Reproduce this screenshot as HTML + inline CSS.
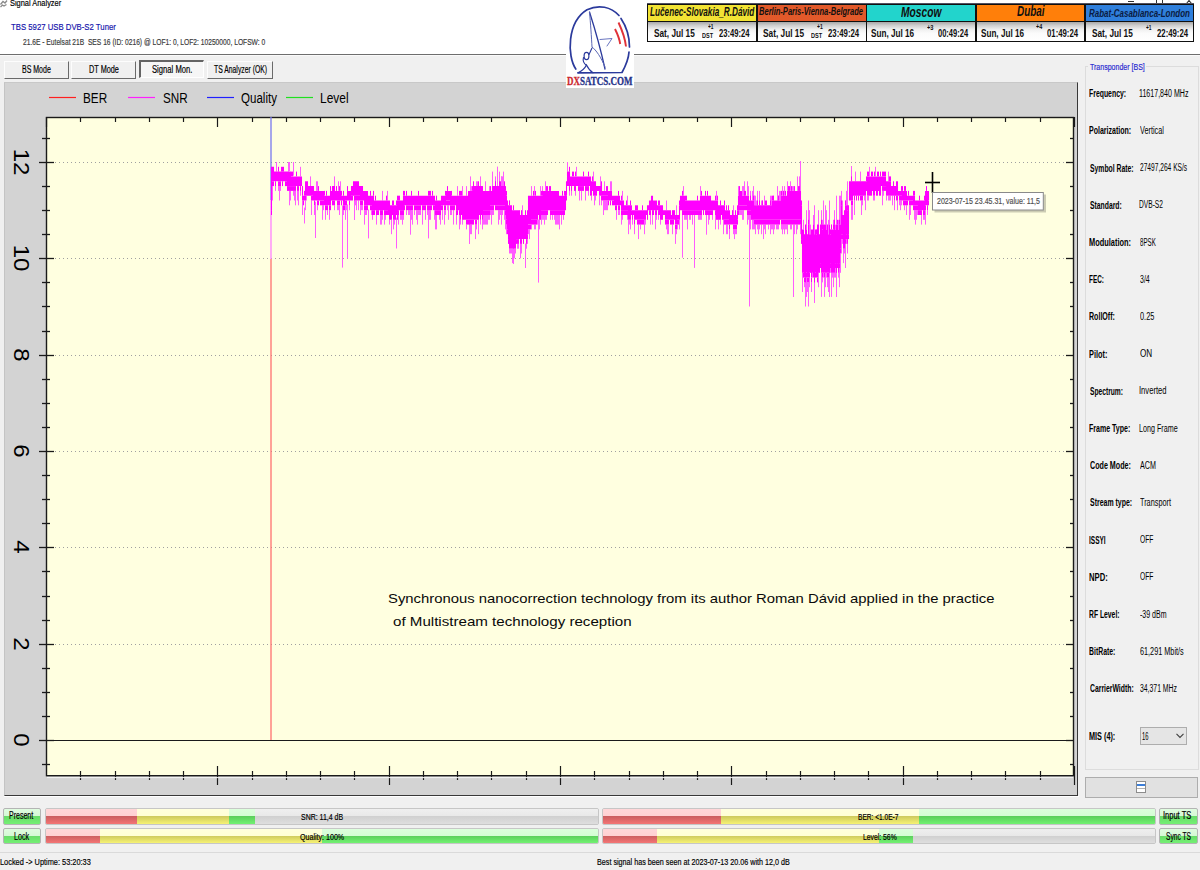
<!DOCTYPE html><html><head><meta charset="utf-8"><style>html,body{margin:0;padding:0;width:1200px;height:870px;overflow:hidden;background:#f0f0f0;position:relative;font-family:"Liberation Sans",sans-serif}.a{position:absolute;box-sizing:border-box}.t{position:absolute;white-space:pre;line-height:1;transform-origin:0 0}.btn{position:absolute;box-sizing:border-box;background:#f0f0f0;border-top:1px solid #fdfdfd;border-left:1px solid #fdfdfd;border-right:1.6px solid #6a6a6a;border-bottom:1.6px solid #6a6a6a}.pb{position:absolute;box-sizing:border-box;border:1px solid #c6c6c6;border-radius:2px;overflow:hidden;background:#e8e8e8}.seg{position:absolute;top:0;bottom:0}.r{background:linear-gradient(#ffd6d8 0,#ffd0d2 50%,#cc5e60 50%,#f47575 100%)}.y{background:linear-gradient(#ffffdc 0,#ffffd4 50%,#cfcb5e 50%,#f6f274 100%)}.g{background:linear-gradient(#dcffdc 0,#d4fdd4 50%,#5ccf5c 50%,#72f272 100%)}.gr{background:linear-gradient(#efefef 0,#e8e8e8 50%,#d0d0d0 50%,#dedede 100%)}.gb{position:absolute;box-sizing:border-box;border:1px solid #b4b4b4;border-radius:2px;background:linear-gradient(#e0fce0 0,#d4f8d4 50%,#68dc68 50%,#74f074 100%)}</style></head><body><div class="a" style="left:0;top:0;width:1200px;height:54px;background:#fff"></div><div class="a" style="left:0;top:54px;width:1200px;height:1px;background:#6e6e6e"></div><div class="a" style="left:0;top:55px;width:1200px;height:1px;background:#fafafa"></div><svg class="a" style="left:0;top:0" width="8" height="8"><path d="M0.5 4.5L3 1.5L5 3L7 0.5M0.5 7L2.5 5L4 6L6.5 4.5" stroke="#8a8a8a" stroke-width="1.3" fill="none"/></svg><div class="a" style="left:1128px;top:0.7px;width:6.3px;height:1.2px;background:#303030"></div><div class="a" style="left:1156.3px;top:0;width:6.4px;height:3.5px;border:1.2px solid #303030;border-top:none"></div><svg class="a" style="left:1185px;top:0" width="8" height="4"><path d="M1.5 3.5L4 0.5L6.5 3.5" stroke="#303030" stroke-width="1.1" fill="none"/></svg><div class="btn" style="left:3.5px;top:60.5px;width:65.5px;height:18px"></div><div class="btn" style="left:71.2px;top:60.5px;width:65.3px;height:18px"></div><div class="btn" style="left:207px;top:60.5px;width:65.5px;height:18px"></div><div class="a" style="left:139.3px;top:60px;width:65px;height:18px;background:#f6f6f6;border-top:2px solid #646464;border-left:2px solid #646464;border-right:1px solid #fff;border-bottom:1px solid #fff"></div><div class="a" style="left:4px;top:82px;width:1074px;height:714px;background:#d3d3d3;border-left:1px solid #c4c4c4;border-top:1px solid #c8c8c8;border-right:1.6px solid #383838;border-bottom:1.6px solid #383838"></div><div class="a" style="left:4px;top:796px;width:1075px;height:1px;background:#fff"></div><svg class="a" style="left:0;top:0" width="1200" height="870" viewBox="0 0 1200 870"><rect x="46" y="117" width="1028" height="658" fill="#ffffe0"/><line x1="55" y1="644.5" x2="1066" y2="644.5" stroke="#a0a0a0" stroke-width="1" stroke-dasharray="1 3"/><line x1="55" y1="547.5" x2="1066" y2="547.5" stroke="#a0a0a0" stroke-width="1" stroke-dasharray="1 3"/><line x1="55" y1="451.5" x2="1066" y2="451.5" stroke="#a0a0a0" stroke-width="1" stroke-dasharray="1 3"/><line x1="55" y1="355.5" x2="1066" y2="355.5" stroke="#a0a0a0" stroke-width="1" stroke-dasharray="1 3"/><line x1="55" y1="258.5" x2="1066" y2="258.5" stroke="#a0a0a0" stroke-width="1" stroke-dasharray="1 3"/><line x1="55" y1="162.5" x2="1066" y2="162.5" stroke="#a0a0a0" stroke-width="1" stroke-dasharray="1 3"/><line x1="39" y1="740.5" x2="1074" y2="740.5" stroke="#1a1a1a" stroke-width="1"/><line x1="42" y1="764.5" x2="50" y2="764.5" stroke="#1a1a1a" stroke-width="1.3"/><line x1="1070" y1="764.5" x2="1074" y2="764.5" stroke="#1a1a1a" stroke-width="1.3"/><line x1="39" y1="740.5" x2="54" y2="740.5" stroke="#1a1a1a" stroke-width="1.3"/><line x1="1066" y1="740.5" x2="1074" y2="740.5" stroke="#1a1a1a" stroke-width="1.3"/><line x1="42" y1="716.5" x2="50" y2="716.5" stroke="#1a1a1a" stroke-width="1.3"/><line x1="1070" y1="716.5" x2="1074" y2="716.5" stroke="#1a1a1a" stroke-width="1.3"/><line x1="42" y1="692.5" x2="50" y2="692.5" stroke="#1a1a1a" stroke-width="1.3"/><line x1="1070" y1="692.5" x2="1074" y2="692.5" stroke="#1a1a1a" stroke-width="1.3"/><line x1="42" y1="668.5" x2="50" y2="668.5" stroke="#1a1a1a" stroke-width="1.3"/><line x1="1070" y1="668.5" x2="1074" y2="668.5" stroke="#1a1a1a" stroke-width="1.3"/><line x1="39" y1="644.5" x2="54" y2="644.5" stroke="#1a1a1a" stroke-width="1.3"/><line x1="1066" y1="644.5" x2="1074" y2="644.5" stroke="#1a1a1a" stroke-width="1.3"/><line x1="42" y1="620.5" x2="50" y2="620.5" stroke="#1a1a1a" stroke-width="1.3"/><line x1="1070" y1="620.5" x2="1074" y2="620.5" stroke="#1a1a1a" stroke-width="1.3"/><line x1="42" y1="596.5" x2="50" y2="596.5" stroke="#1a1a1a" stroke-width="1.3"/><line x1="1070" y1="596.5" x2="1074" y2="596.5" stroke="#1a1a1a" stroke-width="1.3"/><line x1="42" y1="571.5" x2="50" y2="571.5" stroke="#1a1a1a" stroke-width="1.3"/><line x1="1070" y1="571.5" x2="1074" y2="571.5" stroke="#1a1a1a" stroke-width="1.3"/><line x1="39" y1="547.5" x2="54" y2="547.5" stroke="#1a1a1a" stroke-width="1.3"/><line x1="1066" y1="547.5" x2="1074" y2="547.5" stroke="#1a1a1a" stroke-width="1.3"/><line x1="42" y1="523.5" x2="50" y2="523.5" stroke="#1a1a1a" stroke-width="1.3"/><line x1="1070" y1="523.5" x2="1074" y2="523.5" stroke="#1a1a1a" stroke-width="1.3"/><line x1="42" y1="499.5" x2="50" y2="499.5" stroke="#1a1a1a" stroke-width="1.3"/><line x1="1070" y1="499.5" x2="1074" y2="499.5" stroke="#1a1a1a" stroke-width="1.3"/><line x1="42" y1="475.5" x2="50" y2="475.5" stroke="#1a1a1a" stroke-width="1.3"/><line x1="1070" y1="475.5" x2="1074" y2="475.5" stroke="#1a1a1a" stroke-width="1.3"/><line x1="39" y1="451.5" x2="54" y2="451.5" stroke="#1a1a1a" stroke-width="1.3"/><line x1="1066" y1="451.5" x2="1074" y2="451.5" stroke="#1a1a1a" stroke-width="1.3"/><line x1="42" y1="427.5" x2="50" y2="427.5" stroke="#1a1a1a" stroke-width="1.3"/><line x1="1070" y1="427.5" x2="1074" y2="427.5" stroke="#1a1a1a" stroke-width="1.3"/><line x1="42" y1="403.5" x2="50" y2="403.5" stroke="#1a1a1a" stroke-width="1.3"/><line x1="1070" y1="403.5" x2="1074" y2="403.5" stroke="#1a1a1a" stroke-width="1.3"/><line x1="42" y1="379.5" x2="50" y2="379.5" stroke="#1a1a1a" stroke-width="1.3"/><line x1="1070" y1="379.5" x2="1074" y2="379.5" stroke="#1a1a1a" stroke-width="1.3"/><line x1="39" y1="355.5" x2="54" y2="355.5" stroke="#1a1a1a" stroke-width="1.3"/><line x1="1066" y1="355.5" x2="1074" y2="355.5" stroke="#1a1a1a" stroke-width="1.3"/><line x1="42" y1="331.5" x2="50" y2="331.5" stroke="#1a1a1a" stroke-width="1.3"/><line x1="1070" y1="331.5" x2="1074" y2="331.5" stroke="#1a1a1a" stroke-width="1.3"/><line x1="42" y1="306.5" x2="50" y2="306.5" stroke="#1a1a1a" stroke-width="1.3"/><line x1="1070" y1="306.5" x2="1074" y2="306.5" stroke="#1a1a1a" stroke-width="1.3"/><line x1="42" y1="282.5" x2="50" y2="282.5" stroke="#1a1a1a" stroke-width="1.3"/><line x1="1070" y1="282.5" x2="1074" y2="282.5" stroke="#1a1a1a" stroke-width="1.3"/><line x1="39" y1="258.5" x2="54" y2="258.5" stroke="#1a1a1a" stroke-width="1.3"/><line x1="1066" y1="258.5" x2="1074" y2="258.5" stroke="#1a1a1a" stroke-width="1.3"/><line x1="42" y1="234.5" x2="50" y2="234.5" stroke="#1a1a1a" stroke-width="1.3"/><line x1="1070" y1="234.5" x2="1074" y2="234.5" stroke="#1a1a1a" stroke-width="1.3"/><line x1="42" y1="210.5" x2="50" y2="210.5" stroke="#1a1a1a" stroke-width="1.3"/><line x1="1070" y1="210.5" x2="1074" y2="210.5" stroke="#1a1a1a" stroke-width="1.3"/><line x1="42" y1="186.5" x2="50" y2="186.5" stroke="#1a1a1a" stroke-width="1.3"/><line x1="1070" y1="186.5" x2="1074" y2="186.5" stroke="#1a1a1a" stroke-width="1.3"/><line x1="39" y1="162.5" x2="54" y2="162.5" stroke="#1a1a1a" stroke-width="1.3"/><line x1="1066" y1="162.5" x2="1074" y2="162.5" stroke="#1a1a1a" stroke-width="1.3"/><line x1="42" y1="138.5" x2="50" y2="138.5" stroke="#1a1a1a" stroke-width="1.3"/><line x1="1070" y1="138.5" x2="1074" y2="138.5" stroke="#1a1a1a" stroke-width="1.3"/><line x1="46.5" y1="117" x2="46.5" y2="127" stroke="#1a1a1a" stroke-width="1.2"/><line x1="80.5" y1="771" x2="80.5" y2="780" stroke="#1a1a1a" stroke-width="1.2"/><line x1="80.5" y1="117" x2="80.5" y2="122" stroke="#1a1a1a" stroke-width="1.2"/><line x1="115.5" y1="771" x2="115.5" y2="780" stroke="#1a1a1a" stroke-width="1.2"/><line x1="115.5" y1="117" x2="115.5" y2="122" stroke="#1a1a1a" stroke-width="1.2"/><line x1="149.5" y1="771" x2="149.5" y2="780" stroke="#1a1a1a" stroke-width="1.2"/><line x1="149.5" y1="117" x2="149.5" y2="122" stroke="#1a1a1a" stroke-width="1.2"/><line x1="183.5" y1="771" x2="183.5" y2="780" stroke="#1a1a1a" stroke-width="1.2"/><line x1="183.5" y1="117" x2="183.5" y2="122" stroke="#1a1a1a" stroke-width="1.2"/><line x1="217.5" y1="766" x2="217.5" y2="785" stroke="#1a1a1a" stroke-width="1.2"/><line x1="217.5" y1="117" x2="217.5" y2="127" stroke="#1a1a1a" stroke-width="1.2"/><line x1="252.5" y1="771" x2="252.5" y2="780" stroke="#1a1a1a" stroke-width="1.2"/><line x1="252.5" y1="117" x2="252.5" y2="122" stroke="#1a1a1a" stroke-width="1.2"/><line x1="286.5" y1="771" x2="286.5" y2="780" stroke="#1a1a1a" stroke-width="1.2"/><line x1="286.5" y1="117" x2="286.5" y2="122" stroke="#1a1a1a" stroke-width="1.2"/><line x1="320.5" y1="771" x2="320.5" y2="780" stroke="#1a1a1a" stroke-width="1.2"/><line x1="320.5" y1="117" x2="320.5" y2="122" stroke="#1a1a1a" stroke-width="1.2"/><line x1="354.5" y1="771" x2="354.5" y2="780" stroke="#1a1a1a" stroke-width="1.2"/><line x1="354.5" y1="117" x2="354.5" y2="122" stroke="#1a1a1a" stroke-width="1.2"/><line x1="389.5" y1="766" x2="389.5" y2="785" stroke="#1a1a1a" stroke-width="1.2"/><line x1="389.5" y1="117" x2="389.5" y2="127" stroke="#1a1a1a" stroke-width="1.2"/><line x1="423.5" y1="771" x2="423.5" y2="780" stroke="#1a1a1a" stroke-width="1.2"/><line x1="423.5" y1="117" x2="423.5" y2="122" stroke="#1a1a1a" stroke-width="1.2"/><line x1="457.5" y1="771" x2="457.5" y2="780" stroke="#1a1a1a" stroke-width="1.2"/><line x1="457.5" y1="117" x2="457.5" y2="122" stroke="#1a1a1a" stroke-width="1.2"/><line x1="491.5" y1="771" x2="491.5" y2="780" stroke="#1a1a1a" stroke-width="1.2"/><line x1="491.5" y1="117" x2="491.5" y2="122" stroke="#1a1a1a" stroke-width="1.2"/><line x1="526.5" y1="771" x2="526.5" y2="780" stroke="#1a1a1a" stroke-width="1.2"/><line x1="526.5" y1="117" x2="526.5" y2="122" stroke="#1a1a1a" stroke-width="1.2"/><line x1="560.5" y1="766" x2="560.5" y2="785" stroke="#1a1a1a" stroke-width="1.2"/><line x1="560.5" y1="117" x2="560.5" y2="127" stroke="#1a1a1a" stroke-width="1.2"/><line x1="594.5" y1="771" x2="594.5" y2="780" stroke="#1a1a1a" stroke-width="1.2"/><line x1="594.5" y1="117" x2="594.5" y2="122" stroke="#1a1a1a" stroke-width="1.2"/><line x1="629.5" y1="771" x2="629.5" y2="780" stroke="#1a1a1a" stroke-width="1.2"/><line x1="629.5" y1="117" x2="629.5" y2="122" stroke="#1a1a1a" stroke-width="1.2"/><line x1="663.5" y1="771" x2="663.5" y2="780" stroke="#1a1a1a" stroke-width="1.2"/><line x1="663.5" y1="117" x2="663.5" y2="122" stroke="#1a1a1a" stroke-width="1.2"/><line x1="697.5" y1="771" x2="697.5" y2="780" stroke="#1a1a1a" stroke-width="1.2"/><line x1="697.5" y1="117" x2="697.5" y2="122" stroke="#1a1a1a" stroke-width="1.2"/><line x1="731.5" y1="766" x2="731.5" y2="785" stroke="#1a1a1a" stroke-width="1.2"/><line x1="731.5" y1="117" x2="731.5" y2="127" stroke="#1a1a1a" stroke-width="1.2"/><line x1="766.5" y1="771" x2="766.5" y2="780" stroke="#1a1a1a" stroke-width="1.2"/><line x1="766.5" y1="117" x2="766.5" y2="122" stroke="#1a1a1a" stroke-width="1.2"/><line x1="800.5" y1="771" x2="800.5" y2="780" stroke="#1a1a1a" stroke-width="1.2"/><line x1="800.5" y1="117" x2="800.5" y2="122" stroke="#1a1a1a" stroke-width="1.2"/><line x1="834.5" y1="771" x2="834.5" y2="780" stroke="#1a1a1a" stroke-width="1.2"/><line x1="834.5" y1="117" x2="834.5" y2="122" stroke="#1a1a1a" stroke-width="1.2"/><line x1="868.5" y1="771" x2="868.5" y2="780" stroke="#1a1a1a" stroke-width="1.2"/><line x1="868.5" y1="117" x2="868.5" y2="122" stroke="#1a1a1a" stroke-width="1.2"/><line x1="903.5" y1="766" x2="903.5" y2="785" stroke="#1a1a1a" stroke-width="1.2"/><line x1="903.5" y1="117" x2="903.5" y2="127" stroke="#1a1a1a" stroke-width="1.2"/><line x1="937.5" y1="771" x2="937.5" y2="780" stroke="#1a1a1a" stroke-width="1.2"/><line x1="937.5" y1="117" x2="937.5" y2="122" stroke="#1a1a1a" stroke-width="1.2"/><line x1="971.5" y1="771" x2="971.5" y2="780" stroke="#1a1a1a" stroke-width="1.2"/><line x1="971.5" y1="117" x2="971.5" y2="122" stroke="#1a1a1a" stroke-width="1.2"/><line x1="1005.5" y1="771" x2="1005.5" y2="780" stroke="#1a1a1a" stroke-width="1.2"/><line x1="1005.5" y1="117" x2="1005.5" y2="122" stroke="#1a1a1a" stroke-width="1.2"/><line x1="1040.5" y1="771" x2="1040.5" y2="780" stroke="#1a1a1a" stroke-width="1.2"/><line x1="1040.5" y1="117" x2="1040.5" y2="122" stroke="#1a1a1a" stroke-width="1.2"/><line x1="1074.5" y1="766" x2="1074.5" y2="785" stroke="#1a1a1a" stroke-width="1.2"/><line x1="1074.5" y1="117" x2="1074.5" y2="127" stroke="#1a1a1a" stroke-width="1.2"/><rect x="46.5" y="117.5" width="1027" height="658.2" fill="none" stroke="#1a1a1a" stroke-width="1.4"/><line x1="47" y1="777.6" x2="1073" y2="777.6" stroke="#f4f4f4" stroke-width="1"/><line x1="271" y1="259" x2="271" y2="740" stroke="#ff7070" stroke-width="1.3"/><line x1="271" y1="200" x2="271" y2="259" stroke="#ff80ff" stroke-width="1.3"/><line x1="271" y1="117" x2="271" y2="200" stroke="#7878f0" stroke-width="1.3"/><path d="M272.5 186.1V200.5M275.5 186.1V190.9M276.5 171.6V162.0M278.5 186.1V190.9M279.5 186.1V200.5M280.5 186.1V190.9M288.5 171.6V162.0M289.5 190.9V205.3M290.5 190.9V200.5M293.5 190.9V195.7M294.5 190.9V200.5M295.5 190.9V205.3M297.5 190.9V200.5M298.5 190.9V205.3M300.5 190.9V195.7M300.5 176.4V166.8M302.5 200.5V215.0M305.5 200.5V210.2M306.5 195.7V200.5M310.5 186.1V176.4M311.5 200.5V215.0M314.5 205.3V215.0M316.5 190.9V181.3M317.5 205.3V210.2M317.5 190.9V181.3M322.5 205.3V219.8M323.5 205.3V210.2M325.5 210.2V219.8M327.5 210.2V215.0M329.5 210.2V219.8M334.5 205.3V210.2M334.5 186.1V176.4M337.5 205.3V210.2M338.5 205.3V210.2M338.5 190.9V181.3M339.5 205.3V215.0M340.5 190.9V181.3M343.5 210.2V215.0M345.5 205.3V219.8M346.5 205.3V210.2M349.5 205.3V210.2M354.5 200.5V205.3M355.5 200.5V205.3M356.5 200.5V210.2M358.5 200.5V210.2M360.5 205.3V215.0M361.5 205.3V210.2M362.5 205.3V210.2M364.5 210.2V224.6M365.5 210.2V215.0M366.5 210.2V215.0M371.5 210.2V215.0M372.5 215.0V219.8M376.5 215.0V224.6M380.5 215.0V224.6M381.5 215.0V224.6M382.5 215.0V219.8M382.5 200.5V190.9M384.5 215.0V224.6M385.5 215.0V219.8M387.5 200.5V190.9M389.5 219.8V224.6M391.5 219.8V234.2M393.5 219.8V229.4M394.5 219.8V224.6M398.5 215.0V224.6M400.5 215.0V219.8M401.5 215.0V219.8M402.5 215.0V224.6M403.5 215.0V219.8M406.5 210.2V215.0M408.5 210.2V215.0M409.5 210.2V215.0M411.5 210.2V219.8M412.5 210.2V224.6M414.5 210.2V215.0M416.5 210.2V219.8M417.5 210.2V224.6M418.5 210.2V215.0M419.5 210.2V215.0M420.5 210.2V215.0M422.5 210.2V224.6M425.5 210.2V219.8M427.5 210.2V215.0M429.5 210.2V219.8M430.5 210.2V219.8M434.5 210.2V219.8M435.5 215.0V229.4M436.5 215.0V229.4M439.5 215.0V219.8M440.5 215.0V224.6M442.5 210.2V219.8M444.5 210.2V224.6M445.5 210.2V215.0M447.5 205.3V210.2M448.5 205.3V219.8M450.5 210.2V215.0M451.5 210.2V215.0M453.5 210.2V224.6M456.5 215.0V224.6M457.5 195.7V186.1M459.5 215.0V229.4M460.5 219.8V224.6M462.5 219.8V224.6M462.5 195.7V186.1M466.5 195.7V186.1M466.5 224.6V229.4M469.5 224.6V234.2M470.5 190.9V176.4M470.5 224.6V234.2M471.5 190.9V186.1M471.5 224.6V234.2M475.5 224.6V239.1M476.5 186.1V181.3M476.5 224.6V229.4M477.5 186.1V181.3M478.5 219.8V234.2M480.5 186.1V176.4M480.5 219.8V224.6M482.5 190.9V186.1M482.5 219.8V229.4M483.5 215.0V224.6M484.5 215.0V224.6M485.5 215.0V224.6M485.5 190.9V181.3M486.5 215.0V224.6M487.5 215.0V224.6M488.5 215.0V219.8M489.5 190.9V186.1M489.5 215.0V219.8M490.5 210.2V215.0M491.5 210.2V224.6M492.5 186.1V171.6M492.5 210.2V215.0M493.5 210.2V215.0M495.5 186.1V176.4M498.5 210.2V224.6M499.5 186.1V171.6M499.5 210.2V219.8M500.5 210.2V215.0M501.5 186.1V176.4M501.5 210.2V224.6M501.5 186.1V176.4M502.5 210.2V215.0M502.5 186.1V176.4M503.5 186.1V171.6M504.5 210.2V219.8M505.5 215.0V229.4M506.5 224.6V234.2M509.5 205.3V200.5M509.5 248.7V253.5M510.5 248.7V253.5M511.5 248.7V253.5M512.5 248.7V263.1M514.5 248.7V258.3M515.5 248.7V253.5M517.5 243.9V248.7M518.5 243.9V248.7M520.5 243.9V258.3M521.5 243.9V253.5M522.5 215.0V205.3M526.5 243.9V248.7M527.5 239.1V243.9M528.5 229.4V234.2M529.5 229.4V239.1M531.5 224.6V229.4M531.5 195.7V186.1M534.5 224.6V229.4M534.5 195.7V186.1M535.5 224.6V229.4M537.5 219.8V224.6M539.5 219.8V229.4M540.5 195.7V186.1M541.5 215.0V224.6M542.5 195.7V186.1M542.5 215.0V219.8M543.5 215.0V219.8M544.5 215.0V224.6M545.5 190.9V181.3M545.5 215.0V219.8M546.5 215.0V219.8M550.5 215.0V219.8M552.5 215.0V219.8M554.5 215.0V219.8M555.5 215.0V224.6M556.5 215.0V224.6M557.5 215.0V224.6M558.5 215.0V224.6M559.5 215.0V229.4M561.5 215.0V224.6M563.5 215.0V219.8M567.5 171.6V162.0M569.5 190.9V195.7M571.5 190.9V195.7M575.5 190.9V195.7M576.5 176.4V166.8M579.5 190.9V200.5M581.5 190.9V200.5M585.5 190.9V200.5M588.5 190.9V195.7M591.5 195.7V200.5M593.5 181.3V171.6M594.5 195.7V205.3M595.5 195.7V200.5M599.5 195.7V205.3M600.5 186.1V176.4M601.5 200.5V205.3M603.5 200.5V215.0M604.5 200.5V210.2M604.5 190.9V181.3M605.5 200.5V210.2M606.5 200.5V210.2M607.5 200.5V210.2M610.5 190.9V181.3M611.5 190.9V181.3M616.5 210.2V219.8M618.5 210.2V215.0M619.5 210.2V215.0M621.5 215.0V224.6M622.5 215.0V219.8M622.5 200.5V190.9M627.5 215.0V219.8M627.5 205.3V195.7M628.5 219.8V234.2M629.5 219.8V224.6M630.5 219.8V229.4M632.5 219.8V224.6M634.5 224.6V234.2M638.5 224.6V239.1M640.5 224.6V229.4M644.5 219.8V234.2M645.5 219.8V224.6M650.5 215.0V224.6M652.5 215.0V224.6M655.5 215.0V229.4M656.5 215.0V219.8M658.5 215.0V219.8M660.5 219.8V224.6M666.5 224.6V229.4M666.5 210.2V200.5M667.5 224.6V234.2M668.5 224.6V234.2M672.5 224.6V234.2M675.5 229.4V243.9M676.5 229.4V234.2M676.5 215.0V205.3M677.5 224.6V229.4M679.5 219.8V229.4M682.5 215.0V219.8M683.5 195.7V186.1M684.5 215.0V219.8M685.5 215.0V219.8M686.5 215.0V219.8M687.5 215.0V229.4M689.5 215.0V219.8M690.5 215.0V219.8M692.5 215.0V224.6M694.5 215.0V219.8M698.5 215.0V219.8M699.5 215.0V219.8M700.5 215.0V219.8M700.5 195.7V186.1M701.5 215.0V219.8M708.5 215.0V224.6M709.5 215.0V219.8M712.5 215.0V219.8M715.5 215.0V229.4M716.5 200.5V190.9M718.5 219.8V229.4M720.5 219.8V224.6M723.5 219.8V234.2M726.5 224.6V234.2M727.5 224.6V234.2M729.5 229.4V239.1M733.5 229.4V234.2M733.5 215.0V205.3M734.5 229.4V239.1M735.5 229.4V234.2M736.5 229.4V234.2M738.5 195.7V186.1M739.5 210.2V215.0M740.5 210.2V215.0M741.5 210.2V215.0M742.5 210.2V219.8M742.5 195.7V186.1M743.5 195.7V186.1M743.5 210.2V219.8M744.5 195.7V181.3M747.5 195.7V181.3M747.5 215.0V224.6M748.5 195.7V186.1M748.5 215.0V219.8M749.5 215.0V224.6M750.5 200.5V190.9M750.5 215.0V229.4M752.5 200.5V190.9M752.5 219.8V229.4M753.5 200.5V186.1M753.5 219.8V229.4M754.5 205.3V195.7M754.5 224.6V229.4M754.5 205.3V195.7M755.5 205.3V195.7M755.5 224.6V234.2M756.5 205.3V200.5M757.5 205.3V190.9M757.5 224.6V229.4M758.5 224.6V234.2M759.5 205.3V190.9M759.5 224.6V229.4M761.5 205.3V200.5M761.5 224.6V234.2M762.5 205.3V200.5M763.5 224.6V239.1M764.5 205.3V195.7M764.5 224.6V229.4M765.5 224.6V234.2M768.5 224.6V229.4M770.5 205.3V195.7M770.5 224.6V234.2M771.5 205.3V195.7M771.5 224.6V229.4M772.5 224.6V229.4M773.5 200.5V195.7M773.5 224.6V234.2M774.5 224.6V229.4M776.5 224.6V229.4M777.5 200.5V186.1M777.5 224.6V229.4M777.5 200.5V190.9M778.5 200.5V195.7M778.5 224.6V229.4M779.5 200.5V190.9M780.5 200.5V190.9M781.5 224.6V229.4M782.5 195.7V186.1M782.5 224.6V234.2M783.5 195.7V190.9M783.5 224.6V229.4M784.5 224.6V234.2M784.5 195.7V186.1M785.5 224.6V229.4M786.5 224.6V229.4M787.5 190.9V181.3M787.5 224.6V234.2M788.5 190.9V186.1M790.5 190.9V181.3M790.5 224.6V229.4M791.5 224.6V229.4M792.5 190.9V186.1M793.5 190.9V186.1M793.5 224.6V229.4M794.5 224.6V234.2M796.5 224.6V234.2M797.5 190.9V176.4M797.5 224.6V229.4M799.5 190.9V176.4M800.5 190.9V186.1M800.5 224.6V234.2M802.5 272.8V292.0M803.5 229.4V219.8M804.5 282.4V287.2M806.5 229.4V210.2M806.5 277.6V296.9M807.5 282.4V292.0M808.5 224.6V200.5M808.5 282.4V306.5M809.5 234.2V210.2M809.5 277.6V287.2M810.5 234.2V224.6M811.5 282.4V292.0M812.5 272.8V277.6M813.5 224.6V215.0M814.5 234.2V205.3M814.5 282.4V301.7M814.5 234.2V224.6M818.5 224.6V210.2M818.5 272.8V287.2M818.5 224.6V215.0M821.5 224.6V210.2M821.5 272.8V296.9M822.5 229.4V219.8M822.5 277.6V282.4M823.5 224.6V200.5M823.5 272.8V277.6M824.5 277.6V296.9M825.5 224.6V205.3M825.5 272.8V287.2M826.5 229.4V210.2M826.5 272.8V277.6M827.5 277.6V287.2M828.5 234.2V219.8M828.5 277.6V292.0M829.5 224.6V200.5M829.5 272.8V292.0M830.5 268.0V272.8M831.5 229.4V224.6M831.5 272.8V296.9M832.5 272.8V277.6M833.5 229.4V219.8M833.5 272.8V287.2M834.5 224.6V210.2M834.5 272.8V277.6M835.5 229.4V224.6M835.5 268.0V277.6M836.5 224.6V195.7M836.5 272.8V292.0M838.5 272.8V277.6M838.5 229.4V219.8M839.5 224.6V195.7M839.5 268.0V287.2M840.5 224.6V195.7M840.5 253.5V272.8M841.5 205.3V190.9M841.5 239.1V253.5M842.5 215.0V200.5M842.5 239.1V243.9M843.5 248.7V263.1M844.5 248.7V253.5M845.5 205.3V200.5M845.5 243.9V268.0M846.5 205.3V190.9M846.5 239.1V243.9M847.5 210.2V181.3M847.5 243.9V253.5M851.5 205.3V219.8M852.5 205.3V219.8M854.5 200.5V215.0M855.5 181.3V171.6M860.5 181.3V171.6M861.5 200.5V215.0M862.5 200.5V205.3M864.5 195.7V200.5M865.5 195.7V210.2M867.5 195.7V200.5M868.5 195.7V200.5M869.5 176.4V166.8M873.5 195.7V200.5M874.5 195.7V200.5M875.5 176.4V166.8M882.5 190.9V205.3M883.5 190.9V195.7M886.5 195.7V200.5M888.5 195.7V200.5M888.5 181.3V171.6M889.5 195.7V200.5M890.5 195.7V200.5M892.5 195.7V205.3M894.5 200.5V210.2M897.5 200.5V210.2M899.5 200.5V205.3M900.5 200.5V210.2M901.5 200.5V205.3M904.5 205.3V210.2M906.5 205.3V215.0M909.5 205.3V219.8M910.5 205.3V215.0M914.5 210.2V219.8M915.5 210.2V224.6M916.5 210.2V219.8M917.5 210.2V215.0M921.5 215.0V224.6M923.5 215.0V219.8M924.5 215.0V219.8M925.5 210.2V224.6M927.5 210.2V215.0M304.5 207.6V223.5M315.5 201.7V238M342.5 205.5V267.6M347.5 204.5V258.5M354.5 197.3V220M368.5 209.5V238.4M396.5 217.6V248.5M410.5 209.5V234.7M428.5 210.0V238.4M469.5 223.0V244M538.5 219.5V282.6M513.5 245.9V264M525.5 243.5V268M682.5 212.3V257.7M694.5 210.8V267.9M706.5 210.8V234.7M749.5 213.0V306.5M793.5 225.0V297M805.5 276.0V306.5M814.5 276.0V303M829.5 269.0V297M836.5 268.4V297M289.5 171.0V162M293.5 175.7V162M497.5 186.1V166.6M800.5 192.0V161M851.5 180.1V166" stroke="#ff5cff" stroke-width="1" fill="none"/><path d="M271.5 210.2V215.0M272.5 181.3V186.1M273.5 181.3V186.1M275.5 181.3V186.1M278.5 181.3V186.1M278.5 171.6V166.8M279.5 181.3V186.1M280.5 181.3V186.1M281.5 171.6V166.8M282.5 181.3V186.1M282.5 171.6V166.8M283.5 171.6V166.8M285.5 181.3V186.1M286.5 181.3V186.1M287.5 186.1V190.9M288.5 186.1V190.9M289.5 186.1V190.9M290.5 186.1V190.9M291.5 186.1V190.9M291.5 176.4V171.6M292.5 186.1V190.9M292.5 176.4V171.6M293.5 186.1V190.9M294.5 186.1V190.9M295.5 186.1V190.9M296.5 176.4V171.6M297.5 186.1V190.9M298.5 186.1V190.9M300.5 186.1V190.9M302.5 195.7V200.5M303.5 200.5V195.7M304.5 195.7V190.9M305.5 195.7V200.5M305.5 186.1V181.3M306.5 190.9V195.7M311.5 195.7V200.5M312.5 195.7V200.5M314.5 200.5V205.3M317.5 200.5V205.3M318.5 200.5V205.3M318.5 190.9V186.1M320.5 200.5V205.3M321.5 200.5V205.3M322.5 200.5V205.3M323.5 200.5V205.3M324.5 195.7V190.9M325.5 205.3V210.2M326.5 205.3V210.2M326.5 195.7V190.9M327.5 205.3V210.2M329.5 205.3V210.2M330.5 205.3V210.2M330.5 190.9V186.1M332.5 200.5V205.3M333.5 200.5V205.3M334.5 200.5V205.3M336.5 190.9V186.1M337.5 200.5V205.3M338.5 200.5V205.3M339.5 200.5V205.3M339.5 190.9V186.1M341.5 200.5V205.3M341.5 195.7V190.9M343.5 205.3V210.2M343.5 195.7V190.9M344.5 205.3V210.2M345.5 200.5V205.3M346.5 200.5V205.3M347.5 190.9V186.1M349.5 200.5V205.3M351.5 195.7V200.5M352.5 195.7V200.5M354.5 195.7V200.5M355.5 195.7V200.5M356.5 195.7V200.5M357.5 195.7V200.5M358.5 195.7V200.5M359.5 195.7V200.5M360.5 200.5V205.3M361.5 200.5V205.3M362.5 200.5V205.3M364.5 205.3V210.2M365.5 205.3V210.2M366.5 205.3V210.2M367.5 205.3V210.2M370.5 205.3V210.2M370.5 195.7V190.9M371.5 205.3V210.2M372.5 210.2V215.0M373.5 210.2V215.0M373.5 195.7V190.9M374.5 210.2V215.0M375.5 200.5V195.7M376.5 210.2V215.0M377.5 210.2V215.0M378.5 210.2V215.0M380.5 210.2V215.0M381.5 210.2V215.0M382.5 210.2V215.0M384.5 210.2V215.0M385.5 210.2V215.0M386.5 210.2V215.0M386.5 200.5V195.7M387.5 210.2V215.0M389.5 215.0V219.8M390.5 215.0V219.8M391.5 215.0V219.8M392.5 205.3V200.5M393.5 215.0V219.8M393.5 205.3V200.5M394.5 215.0V219.8M395.5 215.0V219.8M396.5 205.3V200.5M397.5 215.0V219.8M397.5 200.5V195.7M398.5 210.2V215.0M398.5 200.5V195.7M399.5 200.5V195.7M400.5 210.2V215.0M401.5 210.2V215.0M402.5 210.2V215.0M403.5 210.2V215.0M403.5 195.7V190.9M404.5 205.3V210.2M404.5 195.7V190.9M406.5 205.3V210.2M406.5 195.7V190.9M407.5 205.3V210.2M408.5 205.3V210.2M409.5 205.3V210.2M410.5 205.3V210.2M411.5 205.3V210.2M411.5 195.7V190.9M412.5 205.3V210.2M414.5 205.3V210.2M415.5 205.3V210.2M416.5 205.3V210.2M417.5 205.3V210.2M418.5 205.3V210.2M418.5 195.7V190.9M419.5 205.3V210.2M420.5 205.3V210.2M422.5 205.3V210.2M423.5 205.3V210.2M424.5 205.3V210.2M425.5 205.3V210.2M427.5 205.3V210.2M428.5 205.3V210.2M428.5 195.7V190.9M429.5 205.3V210.2M429.5 195.7V190.9M430.5 205.3V210.2M430.5 195.7V190.9M431.5 205.3V210.2M432.5 195.7V190.9M433.5 205.3V210.2M434.5 205.3V210.2M435.5 210.2V215.0M436.5 210.2V215.0M436.5 200.5V195.7M437.5 210.2V215.0M438.5 210.2V215.0M439.5 210.2V215.0M440.5 210.2V215.0M441.5 205.3V210.2M442.5 205.3V210.2M444.5 205.3V210.2M445.5 205.3V210.2M445.5 195.7V190.9M446.5 200.5V205.3M447.5 200.5V205.3M447.5 190.9V186.1M448.5 200.5V205.3M449.5 200.5V205.3M450.5 205.3V210.2M451.5 205.3V210.2M451.5 195.7V190.9M452.5 205.3V210.2M453.5 205.3V210.2M454.5 205.3V210.2M456.5 210.2V215.0M457.5 210.2V215.0M459.5 210.2V215.0M459.5 195.7V190.9M460.5 215.0V219.8M460.5 195.7V190.9M461.5 195.7V190.9M462.5 215.0V219.8M463.5 215.0V219.8M466.5 219.8V224.6M467.5 219.8V224.6M468.5 219.8V224.6M469.5 219.8V224.6M470.5 219.8V224.6M471.5 219.8V224.6M472.5 219.8V224.6M472.5 190.9V186.1M473.5 219.8V224.6M473.5 186.1V181.3M475.5 219.8V224.6M476.5 219.8V224.6M477.5 215.0V219.8M478.5 215.0V219.8M478.5 186.1V181.3M480.5 215.0V219.8M482.5 215.0V219.8M482.5 190.9V186.1M483.5 210.2V215.0M484.5 210.2V215.0M485.5 210.2V215.0M486.5 210.2V215.0M487.5 210.2V215.0M488.5 210.2V215.0M489.5 210.2V215.0M490.5 205.3V210.2M490.5 190.9V186.1M491.5 205.3V210.2M492.5 205.3V210.2M493.5 205.3V210.2M495.5 205.3V210.2M495.5 186.1V181.3M496.5 205.3V210.2M497.5 205.3V210.2M498.5 205.3V210.2M499.5 205.3V210.2M499.5 186.1V181.3M500.5 205.3V210.2M500.5 186.1V181.3M501.5 205.3V210.2M502.5 205.3V210.2M503.5 205.3V210.2M504.5 205.3V210.2M504.5 186.1V181.3M505.5 210.2V215.0M505.5 190.9V186.1M506.5 219.8V224.6M506.5 195.7V190.9M507.5 229.4V234.2M508.5 239.1V243.9M509.5 243.9V248.7M509.5 205.3V200.5M510.5 243.9V248.7M511.5 243.9V248.7M512.5 243.9V248.7M513.5 243.9V248.7M513.5 210.2V205.3M514.5 243.9V248.7M515.5 243.9V248.7M516.5 239.1V243.9M517.5 239.1V243.9M518.5 239.1V243.9M519.5 215.0V210.2M520.5 239.1V243.9M521.5 239.1V243.9M521.5 215.0V210.2M523.5 239.1V243.9M525.5 215.0V210.2M526.5 239.1V243.9M527.5 234.2V239.1M528.5 224.6V229.4M529.5 224.6V229.4M530.5 224.6V229.4M531.5 219.8V224.6M532.5 219.8V224.6M533.5 219.8V224.6M533.5 195.7V190.9M534.5 219.8V224.6M535.5 219.8V224.6M535.5 195.7V190.9M536.5 219.8V224.6M537.5 215.0V219.8M539.5 215.0V219.8M540.5 215.0V219.8M541.5 210.2V215.0M541.5 195.7V190.9M542.5 210.2V215.0M542.5 195.7V190.9M543.5 210.2V215.0M544.5 210.2V215.0M545.5 210.2V215.0M546.5 210.2V215.0M546.5 190.9V186.1M547.5 210.2V215.0M547.5 190.9V186.1M549.5 190.9V186.1M550.5 210.2V215.0M550.5 190.9V186.1M551.5 210.2V215.0M552.5 210.2V215.0M553.5 210.2V215.0M554.5 210.2V215.0M555.5 210.2V215.0M556.5 210.2V215.0M557.5 210.2V215.0M558.5 210.2V215.0M559.5 210.2V215.0M560.5 210.2V215.0M561.5 210.2V215.0M562.5 210.2V215.0M562.5 195.7V190.9M563.5 210.2V215.0M564.5 210.2V215.0M564.5 195.7V190.9M566.5 195.7V200.5M569.5 186.1V190.9M569.5 171.6V166.8M571.5 186.1V190.9M572.5 176.4V171.6M573.5 176.4V171.6M574.5 186.1V190.9M575.5 186.1V190.9M575.5 176.4V171.6M578.5 186.1V190.9M579.5 186.1V190.9M580.5 186.1V190.9M581.5 186.1V190.9M582.5 186.1V190.9M583.5 186.1V190.9M583.5 176.4V171.6M585.5 186.1V190.9M586.5 186.1V190.9M587.5 186.1V190.9M588.5 186.1V190.9M588.5 176.4V171.6M590.5 190.9V195.7M591.5 190.9V195.7M592.5 181.3V176.4M593.5 190.9V195.7M594.5 190.9V195.7M595.5 190.9V195.7M596.5 190.9V195.7M599.5 190.9V195.7M601.5 195.7V200.5M601.5 186.1V181.3M602.5 195.7V200.5M603.5 195.7V200.5M604.5 195.7V200.5M605.5 195.7V200.5M606.5 195.7V200.5M606.5 190.9V186.1M607.5 195.7V200.5M607.5 190.9V186.1M608.5 200.5V205.3M610.5 200.5V205.3M612.5 200.5V205.3M613.5 200.5V205.3M615.5 205.3V210.2M616.5 205.3V210.2M618.5 205.3V210.2M618.5 195.7V190.9M619.5 205.3V210.2M621.5 210.2V215.0M621.5 200.5V195.7M622.5 210.2V215.0M623.5 210.2V215.0M624.5 210.2V215.0M625.5 210.2V215.0M626.5 210.2V215.0M626.5 205.3V200.5M627.5 210.2V215.0M628.5 215.0V219.8M629.5 215.0V219.8M630.5 215.0V219.8M630.5 205.3V200.5M631.5 210.2V205.3M632.5 215.0V219.8M634.5 219.8V224.6M635.5 210.2V205.3M636.5 210.2V205.3M637.5 219.8V224.6M637.5 210.2V205.3M638.5 219.8V224.6M639.5 219.8V224.6M640.5 219.8V224.6M641.5 219.8V224.6M642.5 219.8V224.6M642.5 210.2V205.3M643.5 219.8V224.6M644.5 215.0V219.8M645.5 215.0V219.8M647.5 215.0V219.8M649.5 210.2V215.0M650.5 210.2V215.0M652.5 210.2V215.0M653.5 210.2V215.0M655.5 210.2V215.0M656.5 210.2V215.0M658.5 210.2V215.0M658.5 205.3V200.5M659.5 205.3V200.5M660.5 215.0V219.8M661.5 215.0V219.8M662.5 215.0V219.8M665.5 219.8V224.6M666.5 219.8V224.6M667.5 219.8V224.6M668.5 219.8V224.6M670.5 219.8V224.6M671.5 219.8V224.6M672.5 219.8V224.6M672.5 215.0V210.2M673.5 219.8V224.6M673.5 215.0V210.2M674.5 215.0V210.2M675.5 224.6V229.4M676.5 224.6V229.4M677.5 219.8V224.6M678.5 219.8V224.6M679.5 215.0V219.8M679.5 205.3V200.5M682.5 210.2V215.0M682.5 195.7V190.9M683.5 210.2V215.0M684.5 210.2V215.0M685.5 210.2V215.0M685.5 200.5V195.7M686.5 210.2V215.0M686.5 200.5V195.7M687.5 210.2V215.0M688.5 210.2V215.0M689.5 210.2V215.0M690.5 210.2V215.0M691.5 210.2V215.0M692.5 210.2V215.0M693.5 210.2V215.0M694.5 210.2V215.0M695.5 210.2V215.0M696.5 210.2V215.0M697.5 210.2V215.0M697.5 200.5V195.7M698.5 210.2V215.0M699.5 210.2V215.0M700.5 210.2V215.0M701.5 210.2V215.0M701.5 195.7V190.9M703.5 210.2V215.0M705.5 210.2V215.0M705.5 195.7V190.9M706.5 210.2V215.0M707.5 210.2V215.0M707.5 195.7V190.9M708.5 210.2V215.0M709.5 210.2V215.0M710.5 210.2V215.0M711.5 210.2V215.0M712.5 210.2V215.0M715.5 210.2V215.0M715.5 200.5V195.7M716.5 215.0V219.8M717.5 215.0V219.8M717.5 200.5V195.7M718.5 215.0V219.8M719.5 215.0V219.8M720.5 215.0V219.8M720.5 205.3V200.5M722.5 215.0V219.8M723.5 215.0V219.8M724.5 219.8V224.6M724.5 205.3V200.5M725.5 219.8V224.6M726.5 219.8V224.6M726.5 210.2V205.3M727.5 219.8V224.6M728.5 219.8V224.6M728.5 210.2V205.3M729.5 224.6V229.4M732.5 215.0V210.2M733.5 224.6V229.4M734.5 224.6V229.4M735.5 224.6V229.4M735.5 215.0V210.2M736.5 224.6V229.4M737.5 219.8V224.6M737.5 210.2V205.3M738.5 210.2V215.0M739.5 205.3V210.2M739.5 190.9V186.1M740.5 205.3V210.2M741.5 205.3V210.2M742.5 205.3V210.2M743.5 205.3V210.2M744.5 205.3V210.2M744.5 195.7V190.9M745.5 205.3V210.2M745.5 195.7V190.9M746.5 205.3V210.2M747.5 210.2V215.0M748.5 210.2V215.0M749.5 210.2V215.0M750.5 210.2V215.0M750.5 200.5V195.7M751.5 215.0V219.8M752.5 215.0V219.8M753.5 215.0V219.8M753.5 200.5V195.7M754.5 219.8V224.6M755.5 219.8V224.6M756.5 219.8V224.6M757.5 219.8V224.6M757.5 205.3V200.5M758.5 219.8V224.6M759.5 219.8V224.6M759.5 205.3V200.5M760.5 219.8V224.6M761.5 219.8V224.6M762.5 219.8V224.6M762.5 205.3V200.5M763.5 219.8V224.6M764.5 219.8V224.6M765.5 219.8V224.6M765.5 205.3V200.5M766.5 219.8V224.6M766.5 205.3V200.5M767.5 219.8V224.6M768.5 219.8V224.6M769.5 219.8V224.6M770.5 219.8V224.6M770.5 205.3V200.5M771.5 219.8V224.6M772.5 219.8V224.6M772.5 200.5V195.7M773.5 219.8V224.6M773.5 200.5V195.7M774.5 219.8V224.6M775.5 219.8V224.6M776.5 219.8V224.6M777.5 219.8V224.6M778.5 219.8V224.6M778.5 200.5V195.7M779.5 219.8V224.6M781.5 219.8V224.6M781.5 195.7V190.9M782.5 219.8V224.6M783.5 219.8V224.6M783.5 195.7V190.9M784.5 219.8V224.6M785.5 219.8V224.6M785.5 195.7V190.9M786.5 219.8V224.6M787.5 219.8V224.6M788.5 219.8V224.6M788.5 190.9V186.1M789.5 219.8V224.6M789.5 190.9V186.1M790.5 219.8V224.6M791.5 219.8V224.6M791.5 190.9V186.1M792.5 219.8V224.6M793.5 219.8V224.6M794.5 219.8V224.6M794.5 190.9V186.1M795.5 219.8V224.6M796.5 219.8V224.6M797.5 219.8V224.6M798.5 219.8V224.6M798.5 190.9V186.1M799.5 219.8V224.6M799.5 190.9V186.1M800.5 219.8V224.6M801.5 239.1V243.9M801.5 205.3V200.5M802.5 268.0V272.8M803.5 272.8V277.6M804.5 277.6V282.4M805.5 277.6V282.4M806.5 272.8V277.6M807.5 277.6V282.4M808.5 277.6V282.4M808.5 224.6V219.8M809.5 272.8V277.6M810.5 268.0V272.8M811.5 277.6V282.4M812.5 268.0V272.8M814.5 277.6V282.4M815.5 272.8V277.6M816.5 234.2V229.4M817.5 277.6V282.4M818.5 268.0V272.8M819.5 268.0V272.8M820.5 263.1V268.0M821.5 268.0V272.8M821.5 224.6V219.8M822.5 272.8V277.6M822.5 229.4V224.6M823.5 268.0V272.8M824.5 272.8V277.6M825.5 268.0V272.8M826.5 268.0V272.8M827.5 272.8V277.6M828.5 272.8V277.6M829.5 268.0V272.8M830.5 263.1V268.0M830.5 234.2V229.4M831.5 268.0V272.8M831.5 229.4V224.6M832.5 268.0V272.8M833.5 268.0V272.8M833.5 229.4V224.6M834.5 268.0V272.8M834.5 224.6V219.8M835.5 263.1V268.0M836.5 268.0V272.8M837.5 263.1V268.0M837.5 224.6V219.8M838.5 268.0V272.8M839.5 263.1V268.0M839.5 224.6V219.8M840.5 248.7V253.5M841.5 234.2V239.1M841.5 205.3V200.5M842.5 234.2V239.1M843.5 243.9V248.7M844.5 243.9V248.7M845.5 239.1V243.9M845.5 205.3V200.5M846.5 234.2V239.1M847.5 239.1V243.9M847.5 210.2V205.3M848.5 234.2V239.1M851.5 200.5V205.3M851.5 181.3V176.4M852.5 200.5V205.3M854.5 195.7V200.5M856.5 195.7V200.5M858.5 195.7V200.5M860.5 195.7V200.5M861.5 195.7V200.5M862.5 195.7V200.5M863.5 190.9V195.7M864.5 190.9V195.7M865.5 190.9V195.7M866.5 181.3V176.4M867.5 190.9V195.7M867.5 176.4V171.6M868.5 190.9V195.7M868.5 176.4V171.6M869.5 190.9V195.7M870.5 190.9V195.7M871.5 190.9V195.7M871.5 176.4V171.6M872.5 176.4V171.6M873.5 190.9V195.7M874.5 190.9V195.7M874.5 176.4V171.6M876.5 190.9V195.7M877.5 190.9V195.7M877.5 176.4V171.6M878.5 176.4V171.6M879.5 190.9V195.7M880.5 190.9V195.7M880.5 176.4V171.6M882.5 186.1V190.9M882.5 176.4V171.6M883.5 186.1V190.9M883.5 176.4V171.6M884.5 186.1V190.9M884.5 176.4V171.6M885.5 186.1V190.9M885.5 176.4V171.6M886.5 190.9V195.7M887.5 190.9V195.7M888.5 190.9V195.7M889.5 190.9V195.7M889.5 181.3V176.4M890.5 190.9V195.7M890.5 181.3V176.4M891.5 190.9V195.7M892.5 190.9V195.7M893.5 190.9V195.7M893.5 186.1V181.3M894.5 195.7V200.5M896.5 195.7V200.5M896.5 186.1V181.3M897.5 195.7V200.5M897.5 186.1V181.3M899.5 195.7V200.5M900.5 195.7V200.5M901.5 195.7V200.5M901.5 190.9V186.1M902.5 190.9V186.1M903.5 200.5V205.3M904.5 200.5V205.3M904.5 190.9V186.1M905.5 200.5V205.3M905.5 190.9V186.1M906.5 200.5V205.3M907.5 200.5V205.3M908.5 195.7V190.9M909.5 200.5V205.3M910.5 200.5V205.3M911.5 200.5V205.3M912.5 200.5V205.3M913.5 205.3V210.2M913.5 195.7V190.9M914.5 205.3V210.2M914.5 195.7V190.9M915.5 205.3V210.2M916.5 205.3V210.2M917.5 205.3V210.2M918.5 210.2V215.0M919.5 210.2V215.0M919.5 200.5V195.7M920.5 210.2V215.0M921.5 210.2V215.0M923.5 210.2V215.0M924.5 210.2V215.0M924.5 200.5V195.7M925.5 205.3V210.2M926.5 190.9V186.1M927.5 205.3V210.2M928.5 200.5V205.3" stroke="#ff00ff" stroke-width="1" fill="none"/><path d="M271.5 166.8V210.2M272.5 166.8V181.3M273.5 166.8V181.3M274.5 171.6V181.3M275.5 171.6V181.3M276.5 171.6V181.3M277.5 171.6V181.3M278.5 171.6V181.3M279.5 171.6V181.3M280.5 171.6V181.3M281.5 171.6V181.3M282.5 171.6V181.3M283.5 171.6V181.3M284.5 171.6V181.3M285.5 171.6V181.3M286.5 171.6V181.3M287.5 171.6V186.1M288.5 171.6V186.1M289.5 171.6V186.1M290.5 171.6V186.1M291.5 176.4V186.1M292.5 176.4V186.1M293.5 176.4V186.1M294.5 176.4V186.1M295.5 176.4V186.1M296.5 176.4V186.1M297.5 176.4V186.1M298.5 176.4V186.1M299.5 176.4V186.1M300.5 176.4V186.1M301.5 176.4V186.1M302.5 186.1V195.7M303.5 200.5V205.3M304.5 195.7V200.5M305.5 186.1V195.7M306.5 181.3V190.9M307.5 181.3V195.7M308.5 186.1V195.7M309.5 186.1V195.7M310.5 186.1V195.7M311.5 186.1V195.7M312.5 186.1V195.7M313.5 186.1V200.5M314.5 190.9V200.5M315.5 190.9V200.5M316.5 190.9V200.5M317.5 190.9V200.5M318.5 190.9V200.5M319.5 190.9V200.5M320.5 190.9V200.5M321.5 190.9V200.5M322.5 190.9V200.5M323.5 190.9V200.5M324.5 195.7V205.3M325.5 195.7V205.3M326.5 195.7V205.3M327.5 195.7V205.3M328.5 195.7V205.3M329.5 195.7V205.3M330.5 190.9V205.3M331.5 190.9V200.5M332.5 186.1V200.5M333.5 186.1V200.5M334.5 186.1V200.5M335.5 190.9V200.5M336.5 190.9V200.5M337.5 190.9V200.5M338.5 190.9V200.5M339.5 190.9V200.5M340.5 190.9V200.5M341.5 195.7V200.5M342.5 195.7V200.5M343.5 195.7V205.3M344.5 195.7V205.3M345.5 195.7V200.5M346.5 195.7V200.5M347.5 190.9V200.5M348.5 190.9V200.5M349.5 190.9V200.5M350.5 190.9V200.5M351.5 186.1V195.7M352.5 186.1V195.7M353.5 181.3V195.7M354.5 181.3V195.7M355.5 181.3V195.7M356.5 181.3V195.7M357.5 181.3V195.7M358.5 181.3V195.7M359.5 186.1V195.7M360.5 186.1V200.5M361.5 186.1V200.5M362.5 186.1V200.5M363.5 190.9V200.5M364.5 190.9V205.3M365.5 190.9V205.3M366.5 190.9V205.3M367.5 190.9V205.3M368.5 195.7V205.3M369.5 195.7V205.3M370.5 195.7V205.3M371.5 195.7V205.3M372.5 195.7V210.2M373.5 195.7V210.2M374.5 200.5V210.2M375.5 200.5V210.2M376.5 200.5V210.2M377.5 200.5V210.2M378.5 200.5V210.2M379.5 200.5V210.2M380.5 200.5V210.2M381.5 200.5V210.2M382.5 200.5V210.2M383.5 200.5V210.2M384.5 200.5V210.2M385.5 200.5V210.2M386.5 200.5V210.2M387.5 200.5V210.2M388.5 200.5V215.0M389.5 200.5V215.0M390.5 205.3V215.0M391.5 205.3V215.0M392.5 205.3V215.0M393.5 205.3V215.0M394.5 205.3V215.0M395.5 205.3V215.0M396.5 205.3V215.0M397.5 200.5V215.0M398.5 200.5V210.2M399.5 200.5V210.2M400.5 200.5V210.2M401.5 200.5V210.2M402.5 200.5V210.2M403.5 195.7V210.2M404.5 195.7V205.3M405.5 195.7V205.3M406.5 195.7V205.3M407.5 195.7V205.3M408.5 195.7V205.3M409.5 195.7V205.3M410.5 195.7V205.3M411.5 195.7V205.3M412.5 195.7V205.3M413.5 195.7V205.3M414.5 195.7V205.3M415.5 195.7V205.3M416.5 195.7V205.3M417.5 195.7V205.3M418.5 195.7V205.3M419.5 195.7V205.3M420.5 195.7V205.3M421.5 195.7V205.3M422.5 195.7V205.3M423.5 195.7V205.3M424.5 195.7V205.3M425.5 195.7V205.3M426.5 195.7V205.3M427.5 195.7V205.3M428.5 195.7V205.3M429.5 195.7V205.3M430.5 195.7V205.3M431.5 195.7V205.3M432.5 195.7V205.3M433.5 195.7V205.3M434.5 195.7V205.3M435.5 200.5V210.2M436.5 200.5V210.2M437.5 200.5V210.2M438.5 200.5V210.2M439.5 200.5V210.2M440.5 200.5V210.2M441.5 195.7V205.3M442.5 195.7V205.3M443.5 195.7V205.3M444.5 195.7V205.3M445.5 195.7V205.3M446.5 190.9V200.5M447.5 190.9V200.5M448.5 190.9V200.5M449.5 190.9V200.5M450.5 190.9V205.3M451.5 195.7V205.3M452.5 195.7V205.3M453.5 195.7V205.3M454.5 195.7V205.3M455.5 195.7V205.3M456.5 195.7V210.2M457.5 195.7V210.2M458.5 195.7V210.2M459.5 195.7V210.2M460.5 195.7V215.0M461.5 195.7V215.0M462.5 195.7V215.0M463.5 195.7V215.0M464.5 195.7V219.8M465.5 195.7V219.8M466.5 195.7V219.8M467.5 195.7V219.8M468.5 190.9V219.8M469.5 190.9V219.8M470.5 190.9V219.8M471.5 190.9V219.8M472.5 190.9V219.8M473.5 186.1V219.8M474.5 186.1V219.8M475.5 186.1V219.8M476.5 186.1V219.8M477.5 186.1V215.0M478.5 186.1V215.0M479.5 186.1V215.0M480.5 186.1V215.0M481.5 186.1V215.0M482.5 190.9V215.0M483.5 190.9V210.2M484.5 190.9V210.2M485.5 190.9V210.2M486.5 190.9V210.2M487.5 190.9V210.2M488.5 190.9V210.2M489.5 190.9V210.2M490.5 190.9V205.3M491.5 190.9V205.3M492.5 186.1V205.3M493.5 186.1V205.3M494.5 186.1V205.3M495.5 186.1V205.3M496.5 186.1V205.3M497.5 186.1V205.3M498.5 186.1V205.3M499.5 186.1V205.3M500.5 186.1V205.3M501.5 186.1V205.3M502.5 186.1V205.3M503.5 186.1V205.3M504.5 186.1V205.3M505.5 190.9V210.2M506.5 195.7V219.8M507.5 200.5V229.4M508.5 205.3V239.1M509.5 205.3V243.9M510.5 205.3V243.9M511.5 205.3V243.9M512.5 210.2V243.9M513.5 210.2V243.9M514.5 210.2V243.9M515.5 210.2V243.9M516.5 210.2V239.1M517.5 210.2V239.1M518.5 210.2V239.1M519.5 215.0V239.1M520.5 215.0V239.1M521.5 215.0V239.1M522.5 215.0V239.1M523.5 215.0V239.1M524.5 215.0V239.1M525.5 215.0V239.1M526.5 215.0V239.1M527.5 210.2V234.2M528.5 195.7V224.6M529.5 195.7V224.6M530.5 195.7V224.6M531.5 195.7V219.8M532.5 195.7V219.8M533.5 195.7V219.8M534.5 195.7V219.8M535.5 195.7V219.8M536.5 195.7V219.8M537.5 195.7V215.0M538.5 195.7V215.0M539.5 195.7V215.0M540.5 195.7V215.0M541.5 195.7V210.2M542.5 195.7V210.2M543.5 190.9V210.2M544.5 190.9V210.2M545.5 190.9V210.2M546.5 190.9V210.2M547.5 190.9V210.2M548.5 190.9V210.2M549.5 190.9V210.2M550.5 190.9V210.2M551.5 190.9V210.2M552.5 190.9V210.2M553.5 190.9V210.2M554.5 190.9V210.2M555.5 190.9V210.2M556.5 190.9V210.2M557.5 190.9V210.2M558.5 190.9V210.2M559.5 195.7V210.2M560.5 195.7V210.2M561.5 195.7V210.2M562.5 195.7V210.2M563.5 195.7V210.2M564.5 195.7V210.2M565.5 190.9V210.2M566.5 181.3V195.7M567.5 171.6V186.1M568.5 171.6V186.1M569.5 171.6V186.1M570.5 176.4V186.1M571.5 176.4V186.1M572.5 176.4V186.1M573.5 176.4V186.1M574.5 176.4V186.1M575.5 176.4V186.1M576.5 176.4V186.1M577.5 176.4V186.1M578.5 176.4V186.1M579.5 176.4V186.1M580.5 176.4V186.1M581.5 176.4V186.1M582.5 176.4V186.1M583.5 176.4V186.1M584.5 176.4V186.1M585.5 176.4V186.1M586.5 176.4V186.1M587.5 176.4V186.1M588.5 176.4V186.1M589.5 176.4V186.1M590.5 176.4V190.9M591.5 181.3V190.9M592.5 181.3V190.9M593.5 181.3V190.9M594.5 181.3V190.9M595.5 181.3V190.9M596.5 186.1V190.9M597.5 186.1V190.9M598.5 186.1V190.9M599.5 186.1V190.9M600.5 186.1V195.7M601.5 186.1V195.7M602.5 190.9V195.7M603.5 190.9V195.7M604.5 190.9V195.7M605.5 190.9V195.7M606.5 190.9V195.7M607.5 190.9V195.7M608.5 190.9V200.5M609.5 190.9V200.5M610.5 190.9V200.5M611.5 190.9V200.5M612.5 195.7V200.5M613.5 195.7V200.5M614.5 195.7V205.3M615.5 195.7V205.3M616.5 195.7V205.3M617.5 195.7V205.3M618.5 195.7V205.3M619.5 195.7V205.3M620.5 200.5V205.3M621.5 200.5V210.2M622.5 200.5V210.2M623.5 200.5V210.2M624.5 205.3V210.2M625.5 205.3V210.2M626.5 205.3V210.2M627.5 205.3V210.2M628.5 205.3V215.0M629.5 205.3V215.0M630.5 205.3V215.0M631.5 210.2V215.0M632.5 210.2V215.0M633.5 210.2V215.0M634.5 210.2V219.8M635.5 210.2V219.8M636.5 210.2V219.8M637.5 210.2V219.8M638.5 210.2V219.8M639.5 210.2V219.8M640.5 210.2V219.8M641.5 210.2V219.8M642.5 210.2V219.8M643.5 210.2V219.8M644.5 210.2V215.0M645.5 210.2V215.0M646.5 210.2V215.0M647.5 205.3V215.0M648.5 205.3V210.2M649.5 200.5V210.2M650.5 200.5V210.2M651.5 195.7V210.2M652.5 195.7V210.2M653.5 200.5V210.2M654.5 200.5V210.2M655.5 200.5V210.2M656.5 200.5V210.2M657.5 205.3V210.2M658.5 205.3V210.2M659.5 205.3V215.0M660.5 205.3V215.0M661.5 205.3V215.0M662.5 205.3V215.0M663.5 210.2V215.0M664.5 210.2V215.0M665.5 210.2V219.8M666.5 210.2V219.8M667.5 210.2V219.8M668.5 210.2V219.8M669.5 210.2V219.8M670.5 210.2V219.8M671.5 215.0V219.8M672.5 215.0V219.8M673.5 215.0V219.8M674.5 215.0V219.8M675.5 215.0V224.6M676.5 215.0V224.6M677.5 215.0V219.8M678.5 215.0V219.8M679.5 205.3V215.0M680.5 195.7V210.2M681.5 195.7V210.2M682.5 195.7V210.2M683.5 195.7V210.2M684.5 195.7V210.2M685.5 200.5V210.2M686.5 200.5V210.2M687.5 200.5V210.2M688.5 200.5V210.2M689.5 200.5V210.2M690.5 200.5V210.2M691.5 200.5V210.2M692.5 200.5V210.2M693.5 200.5V210.2M694.5 200.5V210.2M695.5 200.5V210.2M696.5 200.5V210.2M697.5 200.5V210.2M698.5 200.5V210.2M699.5 200.5V210.2M700.5 195.7V210.2M701.5 195.7V210.2M702.5 195.7V210.2M703.5 195.7V210.2M704.5 195.7V210.2M705.5 195.7V210.2M706.5 195.7V210.2M707.5 195.7V210.2M708.5 195.7V210.2M709.5 195.7V210.2M710.5 195.7V210.2M711.5 200.5V210.2M712.5 200.5V210.2M713.5 200.5V210.2M714.5 200.5V210.2M715.5 200.5V210.2M716.5 200.5V215.0M717.5 200.5V215.0M718.5 205.3V215.0M719.5 205.3V215.0M720.5 205.3V215.0M721.5 205.3V215.0M722.5 205.3V215.0M723.5 205.3V215.0M724.5 205.3V219.8M725.5 210.2V219.8M726.5 210.2V219.8M727.5 210.2V219.8M728.5 210.2V219.8M729.5 210.2V224.6M730.5 215.0V224.6M731.5 215.0V224.6M732.5 215.0V224.6M733.5 215.0V224.6M734.5 215.0V224.6M735.5 215.0V224.6M736.5 215.0V224.6M737.5 210.2V219.8M738.5 195.7V210.2M739.5 190.9V205.3M740.5 190.9V205.3M741.5 190.9V205.3M742.5 195.7V205.3M743.5 195.7V205.3M744.5 195.7V205.3M745.5 195.7V205.3M746.5 195.7V205.3M747.5 195.7V210.2M748.5 195.7V210.2M749.5 200.5V210.2M750.5 200.5V210.2M751.5 200.5V215.0M752.5 200.5V215.0M753.5 200.5V215.0M754.5 205.3V219.8M755.5 205.3V219.8M756.5 205.3V219.8M757.5 205.3V219.8M758.5 205.3V219.8M759.5 205.3V219.8M760.5 205.3V219.8M761.5 205.3V219.8M762.5 205.3V219.8M763.5 205.3V219.8M764.5 205.3V219.8M765.5 205.3V219.8M766.5 205.3V219.8M767.5 205.3V219.8M768.5 205.3V219.8M769.5 205.3V219.8M770.5 205.3V219.8M771.5 205.3V219.8M772.5 200.5V219.8M773.5 200.5V219.8M774.5 200.5V219.8M775.5 200.5V219.8M776.5 200.5V219.8M777.5 200.5V219.8M778.5 200.5V219.8M779.5 200.5V219.8M780.5 200.5V219.8M781.5 195.7V219.8M782.5 195.7V219.8M783.5 195.7V219.8M784.5 195.7V219.8M785.5 195.7V219.8M786.5 195.7V219.8M787.5 190.9V219.8M788.5 190.9V219.8M789.5 190.9V219.8M790.5 190.9V219.8M791.5 190.9V219.8M792.5 190.9V219.8M793.5 190.9V219.8M794.5 190.9V219.8M795.5 190.9V219.8M796.5 190.9V219.8M797.5 190.9V219.8M798.5 190.9V219.8M799.5 190.9V219.8M800.5 190.9V219.8M801.5 205.3V239.1M802.5 229.4V268.0M803.5 229.4V272.8M804.5 234.2V277.6M805.5 224.6V277.6M806.5 229.4V272.8M807.5 234.2V277.6M808.5 224.6V277.6M809.5 234.2V272.8M810.5 234.2V268.0M811.5 229.4V277.6M812.5 229.4V268.0M813.5 224.6V277.6M814.5 234.2V277.6M815.5 229.4V272.8M816.5 234.2V277.6M817.5 224.6V277.6M818.5 224.6V268.0M819.5 234.2V268.0M820.5 224.6V263.1M821.5 224.6V268.0M822.5 229.4V272.8M823.5 224.6V268.0M824.5 224.6V272.8M825.5 224.6V268.0M826.5 229.4V268.0M827.5 224.6V272.8M828.5 234.2V272.8M829.5 224.6V268.0M830.5 234.2V263.1M831.5 229.4V268.0M832.5 229.4V268.0M833.5 229.4V268.0M834.5 224.6V268.0M835.5 229.4V263.1M836.5 224.6V268.0M837.5 224.6V263.1M838.5 229.4V268.0M839.5 224.6V263.1M840.5 224.6V248.7M841.5 205.3V234.2M842.5 215.0V234.2M843.5 215.0V243.9M844.5 210.2V243.9M845.5 205.3V239.1M846.5 205.3V234.2M847.5 210.2V239.1M848.5 205.3V234.2M849.5 181.3V200.5M850.5 181.3V200.5M851.5 181.3V200.5M852.5 181.3V200.5M853.5 181.3V195.7M854.5 181.3V195.7M855.5 181.3V195.7M856.5 181.3V195.7M857.5 181.3V195.7M858.5 181.3V195.7M859.5 181.3V195.7M860.5 181.3V195.7M861.5 181.3V195.7M862.5 181.3V195.7M863.5 181.3V190.9M864.5 181.3V190.9M865.5 181.3V190.9M866.5 181.3V190.9M867.5 176.4V190.9M868.5 176.4V190.9M869.5 176.4V190.9M870.5 176.4V190.9M871.5 176.4V190.9M872.5 176.4V190.9M873.5 176.4V190.9M874.5 176.4V190.9M875.5 176.4V190.9M876.5 176.4V190.9M877.5 176.4V190.9M878.5 176.4V190.9M879.5 176.4V190.9M880.5 176.4V190.9M881.5 176.4V186.1M882.5 176.4V186.1M883.5 176.4V186.1M884.5 176.4V186.1M885.5 176.4V186.1M886.5 181.3V190.9M887.5 181.3V190.9M888.5 181.3V190.9M889.5 181.3V190.9M890.5 181.3V190.9M891.5 186.1V190.9M892.5 186.1V190.9M893.5 186.1V190.9M894.5 186.1V195.7M895.5 186.1V195.7M896.5 186.1V195.7M897.5 186.1V195.7M898.5 190.9V195.7M899.5 190.9V195.7M900.5 190.9V195.7M901.5 190.9V195.7M902.5 190.9V200.5M903.5 190.9V200.5M904.5 190.9V200.5M905.5 190.9V200.5M906.5 190.9V200.5M907.5 195.7V200.5M908.5 195.7V200.5M909.5 195.7V200.5M910.5 195.7V200.5M911.5 195.7V200.5M912.5 195.7V200.5M913.5 195.7V205.3M914.5 195.7V205.3M915.5 200.5V205.3M916.5 200.5V205.3M917.5 200.5V205.3M918.5 200.5V210.2M919.5 200.5V210.2M920.5 200.5V210.2M921.5 200.5V210.2M922.5 200.5V210.2M923.5 200.5V210.2M924.5 200.5V210.2M925.5 190.9V205.3M926.5 190.9V205.3M927.5 190.9V205.3M928.5 190.9V200.5" stroke="#ff00ff" stroke-width="1.05" fill="none"/><line x1="925" y1="182.5" x2="940" y2="182.5" stroke="#000" stroke-width="1.6"/><line x1="932.5" y1="172" x2="932.5" y2="193" stroke="#000" stroke-width="1.6"/><rect x="934.5" y="194.5" width="111.5" height="18" fill="#000" opacity="0.2"/><rect x="932.5" y="192.5" width="110.8" height="17.5" fill="#fff" stroke="#8a8a8a" stroke-width="1"/><line x1="49" y1="97.5" x2="76" y2="97.5" stroke="#ff2020" stroke-width="1.2"/><line x1="128" y1="97.5" x2="155" y2="97.5" stroke="#ff20ff" stroke-width="1.2"/><line x1="207" y1="97.5" x2="234" y2="97.5" stroke="#2020ff" stroke-width="1.2"/><line x1="286" y1="97.5" x2="313" y2="97.5" stroke="#20e020" stroke-width="1.2"/></svg><div class="t" style="left:21.4px;top:740.0px;font-size:24px;transform-origin:0 0;transform:translate(10.8px,-6.7px) rotate(90deg) scaleY(0.894)">0</div><div class="t" style="left:21.4px;top:643.7px;font-size:24px;transform-origin:0 0;transform:translate(10.8px,-6.7px) rotate(90deg) scaleY(0.894)">2</div><div class="t" style="left:21.4px;top:547.3px;font-size:24px;transform-origin:0 0;transform:translate(10.8px,-6.7px) rotate(90deg) scaleY(0.894)">4</div><div class="t" style="left:21.4px;top:451.0px;font-size:24px;transform-origin:0 0;transform:translate(10.8px,-6.7px) rotate(90deg) scaleY(0.894)">6</div><div class="t" style="left:21.4px;top:354.7px;font-size:24px;transform-origin:0 0;transform:translate(10.8px,-6.7px) rotate(90deg) scaleY(0.894)">8</div><div class="t" style="left:21.4px;top:258.3px;font-size:24px;transform-origin:0 0;transform:translate(10.8px,-13.3px) rotate(90deg) scaleY(0.894)">10</div><div class="t" style="left:21.4px;top:162.0px;font-size:24px;transform-origin:0 0;transform:translate(10.8px,-13.3px) rotate(90deg) scaleY(0.894)">12</div><div class="a" style="left:1084.5px;top:66px;width:114px;height:704px;border:1px solid #dcdcdc"></div><div class="a" style="left:1088px;top:60px;width:58px;height:12px;background:#f0f0f0"></div><div class="a" style="left:1139.5px;top:727px;width:47px;height:18px;background:#e5e5e5;border:1px solid #adadad"></div><svg class="a" style="left:1176px;top:733px" width="8" height="6"><path d="M0.5 0.8L4 4.5L7.5 0.8" stroke="#404040" stroke-width="1.1" fill="none"/></svg><div class="a" style="left:1085px;top:777px;width:113px;height:21px;background:#e1e1e1;border:1px solid #adadad"></div><div class="a" style="left:1136px;top:781px;width:10px;height:12px;background:#fff;border:1px solid #8c8c8c"></div><div class="a" style="left:1137px;top:784px;width:8px;height:2px;background:#3c7ed8"></div><div class="a" style="left:1137px;top:788px;width:8px;height:1px;background:#b0b0b0"></div><div class="pb" style="left:44.5px;top:807.5px;width:554.2px;height:17px"><div class="seg r" style="left:-1.0px;width:92.5px"></div><div class="seg y" style="left:91.5px;width:92.3px"></div><div class="seg g" style="left:183.8px;width:25.7px"></div><div class="seg gr" style="left:209.5px;width:343.7px"></div></div><div class="pb" style="left:44.5px;top:828.3px;width:554.2px;height:16.2px"><div class="seg r" style="left:-1.0px;width:55.5px"></div><div class="seg y" style="left:54.5px;width:222.0px"></div><div class="seg g" style="left:276.5px;width:276.7px"></div></div><div class="pb" style="left:602px;top:807.5px;width:554.3px;height:17px"><div class="seg r" style="left:-1.0px;width:119.2px"></div><div class="seg y" style="left:118.2px;width:197.4px"></div><div class="seg g" style="left:315.6px;width:237.7px"></div></div><div class="pb" style="left:602px;top:828.3px;width:554.3px;height:16.2px"><div class="seg r" style="left:-1.0px;width:55.4px"></div><div class="seg y" style="left:54.4px;width:221.6px"></div><div class="seg g" style="left:276.0px;width:34.0px"></div><div class="seg gr" style="left:310.0px;width:243.3px"></div></div><div class="gb" style="left:3px;top:807.5px;width:38px;height:17px"></div><div class="gb" style="left:1159px;top:807.5px;width:38.5px;height:17px"></div><div class="gb" style="left:3px;top:828.3px;width:38px;height:16.2px"></div><div class="gb" style="left:1159px;top:828.3px;width:38.5px;height:16.2px"></div><div class="a" style="left:0;top:852px;width:1200px;height:1px;background:#dadada"></div><div class="a" style="left:647px;top:3.4px;width:547px;height:38.8px;background:#101010;border-top:1px solid #505060"></div><div class="a" style="left:648.0px;top:4.6px;width:108.2px;height:16.2px;background:#f2e334"></div><div class="a" style="left:648.0px;top:22px;width:108.2px;height:18.6px;background:linear-gradient(#a8a8a8 0,#cfcfcf 18%,#f0f0f0 40%,#fbfbfb 60%,#ffffff 100%)"></div><div class="a" style="left:757.5px;top:4.6px;width:108.0px;height:16.2px;background:#e2592a"></div><div class="a" style="left:757.5px;top:22px;width:108.0px;height:18.6px;background:linear-gradient(#a8a8a8 0,#cfcfcf 18%,#f0f0f0 40%,#fbfbfb 60%,#ffffff 100%)"></div><div class="a" style="left:866.8px;top:4.6px;width:108.4px;height:16.2px;background:#22d4cc"></div><div class="a" style="left:866.8px;top:22px;width:108.4px;height:18.6px;background:linear-gradient(#a8a8a8 0,#cfcfcf 18%,#f0f0f0 40%,#fbfbfb 60%,#ffffff 100%)"></div><div class="a" style="left:976.5px;top:4.6px;width:107.8px;height:16.2px;background:#ff7f0a"></div><div class="a" style="left:976.5px;top:22px;width:107.8px;height:18.6px;background:linear-gradient(#a8a8a8 0,#cfcfcf 18%,#f0f0f0 40%,#fbfbfb 60%,#ffffff 100%)"></div><div class="a" style="left:1085.6px;top:4.6px;width:107.9px;height:16.2px;background:#2f7fdc"></div><div class="a" style="left:1085.6px;top:22px;width:107.9px;height:18.6px;background:linear-gradient(#a8a8a8 0,#cfcfcf 18%,#f0f0f0 40%,#fbfbfb 60%,#ffffff 100%)"></div><div class="a" style="left:566px;top:0;width:68px;height:88px;background:#fff"></div><svg class="a" style="left:560px;top:0" width="80" height="90" viewBox="560 0 80 90">
<g fill="none" stroke="#2b3a9c" stroke-width="1.7" stroke-linecap="round">
<path d="M575.8 69 C 567 56, 567 22, 587 9.8 C 599 4, 611 7, 619 15.5"/>
<path d="M621 18.5 C 626 26, 629.5 36, 629.5 47"/>
<path d="M629 52 C 628.5 60, 625 67, 622 72.5 L 578 72.8"/>
<path d="M589.5 12 C 594 26, 600 46, 605 69" stroke-width="1.3"/>
<path d="M589.5 12.5 C 590.5 22, 591.5 38, 592 47 C 596 50, 601 57, 605 67" stroke-width="1" stroke="#5a66b4"/>
<path d="M600 39.5 L 612 38.5 L 607 46" stroke-width="1" stroke="#6a76c0"/>
<ellipse cx="586.5" cy="56" rx="2.4" ry="3.6" stroke-width="1.2"/>
<path d="M583.5 57.5 C 582.5 61, 584.5 64, 586.5 65.5 M589 54.5 L 592 48" stroke-width="1.1"/>
<path d="M578 72.8 C 582 71, 585 68, 586.5 65 C 588 68, 590 71, 593 72.8" stroke-width="1.2"/>
</g>
<g fill="none" stroke="#e03238" stroke-width="1.9">
<path d="M618.5 22.5 C 622 30, 625 38, 626 46.5"/>
<path d="M615 29 C 617.5 34, 619.5 39, 620.2 44"/>
</g>
</svg><div class="t" style="left:10.02px;top:-2.27px;font-size:9.5px;font-weight:normal;font-style:normal;color:#000;font-family:'Liberation Sans';transform:scaleX(0.7812);-webkit-text-stroke:0.18px currentColor">Signal Analyzer</div><div class="t" style="left:11.00px;top:22.27px;font-size:9.8px;font-weight:normal;font-style:normal;color:#1414ac;font-family:'Liberation Sans';transform:scaleX(0.7924);-webkit-text-stroke:0.18px currentColor">TBS 5927 USB DVB-S2 Tuner</div><div class="t" style="left:23.00px;top:38.12px;font-size:8.8px;font-weight:normal;font-style:normal;color:#3c3c3c;font-family:'Liberation Sans';transform:scaleX(0.7586);-webkit-text-stroke:0.18px currentColor">21.6E - Eutelsat 21B  SES 16 (ID: 0216) @ LOF1: 0, LOF2: 10250000, LOFSW: 0</div><div class="t" style="left:21.50px;top:64.80px;font-size:10px;font-weight:normal;font-style:normal;color:#000;font-family:'Liberation Sans';transform:scaleX(0.7000);-webkit-text-stroke:0.18px currentColor">BS Mode</div><div class="t" style="left:89.07px;top:64.80px;font-size:10px;font-weight:normal;font-style:normal;color:#000;font-family:'Liberation Sans';transform:scaleX(0.7300);-webkit-text-stroke:0.18px currentColor">DT Mode</div><div class="t" style="left:152.04px;top:65.10px;font-size:10px;font-weight:normal;font-style:normal;color:#000;font-family:'Liberation Sans';transform:scaleX(0.7647);-webkit-text-stroke:0.18px currentColor">Signal Mon.</div><div class="t" style="left:213.50px;top:64.80px;font-size:10px;font-weight:normal;font-style:normal;color:#000;font-family:'Liberation Sans';transform:scaleX(0.6818);-webkit-text-stroke:0.18px currentColor">TS Analyzer (OK)</div><div class="t" style="left:83.24px;top:89.83px;font-size:15.5px;font-weight:normal;font-style:normal;color:#000;font-family:'Liberation Sans';transform:scaleX(0.7567);">BER</div><div class="t" style="left:162.55px;top:89.83px;font-size:15.5px;font-weight:normal;font-style:normal;color:#000;font-family:'Liberation Sans';transform:scaleX(0.7548);">SNR</div><div class="t" style="left:241.26px;top:89.83px;font-size:15.5px;font-weight:normal;font-style:normal;color:#000;font-family:'Liberation Sans';transform:scaleX(0.7447);">Quality</div><div class="t" style="left:320.23px;top:89.83px;font-size:15.5px;font-weight:normal;font-style:normal;color:#000;font-family:'Liberation Sans';transform:scaleX(0.7714);">Level</div><div class="t" style="left:1090.00px;top:61.84px;font-size:9.6px;font-weight:normal;font-style:normal;color:#2a2ad0;font-family:'Liberation Sans';transform:scaleX(0.7324);-webkit-text-stroke:0.18px currentColor">Transponder [BS]</div><div class="t" style="left:1089.32px;top:89.13px;font-size:10.2px;font-weight:bold;font-style:normal;color:#000;font-family:'Liberation Sans';transform:scaleX(0.6755);">Frequency:</div><div class="t" style="left:1138.89px;top:88.80px;font-size:10px;font-weight:normal;font-style:normal;color:#000;font-family:'Liberation Sans';transform:scaleX(0.7074);">11617,840 MHz</div><div class="t" style="left:1089.31px;top:126.33px;font-size:10.2px;font-weight:bold;font-style:normal;color:#000;font-family:'Liberation Sans';transform:scaleX(0.6898);">Polarization:</div><div class="t" style="left:1139.60px;top:126.00px;font-size:10px;font-weight:normal;font-style:normal;color:#000;font-family:'Liberation Sans';transform:scaleX(0.7250);">Vertical</div><div class="t" style="left:1090.00px;top:163.53px;font-size:10.2px;font-weight:bold;font-style:normal;color:#000;font-family:'Liberation Sans';transform:scaleX(0.6687);">Symbol Rate:</div><div class="t" style="left:1139.60px;top:163.20px;font-size:10px;font-weight:normal;font-style:normal;color:#000;font-family:'Liberation Sans';transform:scaleX(0.6620);">27497,264 KS/s</div><div class="t" style="left:1090.00px;top:200.73px;font-size:10.2px;font-weight:bold;font-style:normal;color:#000;font-family:'Liberation Sans';transform:scaleX(0.6681);">Standard:</div><div class="t" style="left:1138.94px;top:200.40px;font-size:10px;font-weight:normal;font-style:normal;color:#000;font-family:'Liberation Sans';transform:scaleX(0.6629);">DVB-S2</div><div class="t" style="left:1089.27px;top:237.93px;font-size:10.2px;font-weight:bold;font-style:normal;color:#000;font-family:'Liberation Sans';transform:scaleX(0.7268);">Modulation:</div><div class="t" style="left:1139.60px;top:237.60px;font-size:10px;font-weight:normal;font-style:normal;color:#000;font-family:'Liberation Sans';transform:scaleX(0.6160);">8PSK</div><div class="t" style="left:1089.37px;top:275.13px;font-size:10.2px;font-weight:bold;font-style:normal;color:#000;font-family:'Liberation Sans';transform:scaleX(0.6273);">FEC:</div><div class="t" style="left:1139.60px;top:274.80px;font-size:10px;font-weight:normal;font-style:normal;color:#000;font-family:'Liberation Sans';transform:scaleX(0.7000);">3/4</div><div class="t" style="left:1089.31px;top:312.33px;font-size:10.2px;font-weight:bold;font-style:normal;color:#000;font-family:'Liberation Sans';transform:scaleX(0.6944);">RollOff:</div><div class="t" style="left:1139.60px;top:312.00px;font-size:10px;font-weight:normal;font-style:normal;color:#000;font-family:'Liberation Sans';transform:scaleX(0.7368);">0.25</div><div class="t" style="left:1089.28px;top:349.53px;font-size:10.2px;font-weight:bold;font-style:normal;color:#000;font-family:'Liberation Sans';transform:scaleX(0.7208);">Pilot:</div><div class="t" style="left:1139.60px;top:349.20px;font-size:10px;font-weight:normal;font-style:normal;color:#000;font-family:'Liberation Sans';transform:scaleX(0.8143);">ON</div><div class="t" style="left:1090.00px;top:386.73px;font-size:10.2px;font-weight:bold;font-style:normal;color:#000;font-family:'Liberation Sans';transform:scaleX(0.6540);">Spectrum:</div><div class="t" style="left:1138.84px;top:386.40px;font-size:10px;font-weight:normal;font-style:normal;color:#000;font-family:'Liberation Sans';transform:scaleX(0.7629);">Inverted</div><div class="t" style="left:1089.31px;top:423.93px;font-size:10.2px;font-weight:bold;font-style:normal;color:#000;font-family:'Liberation Sans';transform:scaleX(0.6897);">Frame Type:</div><div class="t" style="left:1138.88px;top:423.60px;font-size:10px;font-weight:normal;font-style:normal;color:#000;font-family:'Liberation Sans';transform:scaleX(0.7170);">Long Frame</div><div class="t" style="left:1090.00px;top:461.13px;font-size:10.2px;font-weight:bold;font-style:normal;color:#000;font-family:'Liberation Sans';transform:scaleX(0.7017);">Code Mode:</div><div class="t" style="left:1139.60px;top:460.80px;font-size:10px;font-weight:normal;font-style:normal;color:#000;font-family:'Liberation Sans';transform:scaleX(0.7136);">ACM</div><div class="t" style="left:1090.00px;top:498.33px;font-size:10.2px;font-weight:bold;font-style:normal;color:#000;font-family:'Liberation Sans';transform:scaleX(0.6836);">Stream type:</div><div class="t" style="left:1139.60px;top:498.00px;font-size:10px;font-weight:normal;font-style:normal;color:#000;font-family:'Liberation Sans';transform:scaleX(0.7302);">Transport</div><div class="t" style="left:1089.36px;top:535.53px;font-size:10.2px;font-weight:bold;font-style:normal;color:#000;font-family:'Liberation Sans';transform:scaleX(0.6400);">ISSYI</div><div class="t" style="left:1139.60px;top:535.20px;font-size:10px;font-weight:normal;font-style:normal;color:#000;font-family:'Liberation Sans';transform:scaleX(0.6700);">OFF</div><div class="t" style="left:1089.25px;top:572.73px;font-size:10.2px;font-weight:bold;font-style:normal;color:#000;font-family:'Liberation Sans';transform:scaleX(0.7522);">NPD:</div><div class="t" style="left:1139.60px;top:572.40px;font-size:10px;font-weight:normal;font-style:normal;color:#000;font-family:'Liberation Sans';transform:scaleX(0.6700);">OFF</div><div class="t" style="left:1089.33px;top:609.93px;font-size:10.2px;font-weight:bold;font-style:normal;color:#000;font-family:'Liberation Sans';transform:scaleX(0.6659);">RF Level:</div><div class="t" style="left:1139.60px;top:609.60px;font-size:10px;font-weight:normal;font-style:normal;color:#000;font-family:'Liberation Sans';transform:scaleX(0.7027);">-39 dBm</div><div class="t" style="left:1089.32px;top:647.13px;font-size:10.2px;font-weight:bold;font-style:normal;color:#000;font-family:'Liberation Sans';transform:scaleX(0.6757);">BitRate:</div><div class="t" style="left:1139.60px;top:646.80px;font-size:10px;font-weight:normal;font-style:normal;color:#000;font-family:'Liberation Sans';transform:scaleX(0.7283);">61,291 Mbit/s</div><div class="t" style="left:1090.00px;top:684.33px;font-size:10.2px;font-weight:bold;font-style:normal;color:#000;font-family:'Liberation Sans';transform:scaleX(0.6719);">CarrierWidth:</div><div class="t" style="left:1139.60px;top:684.00px;font-size:10px;font-weight:normal;font-style:normal;color:#000;font-family:'Liberation Sans';transform:scaleX(0.6852);">34,371 MHz</div><div class="t" style="left:1089.29px;top:731.83px;font-size:10.2px;font-weight:bold;font-style:normal;color:#000;font-family:'Liberation Sans';transform:scaleX(0.7143);">MIS (4):</div><div class="t" style="left:1141.92px;top:731.50px;font-size:10px;font-weight:normal;font-style:normal;color:#000;font-family:'Liberation Sans';transform:scaleX(0.5800);">16</div><div class="t" style="left:301.24px;top:812.58px;font-size:9.2px;font-weight:normal;font-style:normal;color:#000;font-family:'Liberation Sans';transform:scaleX(0.7593);-webkit-text-stroke:0.18px currentColor">SNR: 11,4 dB</div><div class="t" style="left:299.80px;top:832.98px;font-size:9.2px;font-weight:normal;font-style:normal;color:#000;font-family:'Liberation Sans';transform:scaleX(0.7719);-webkit-text-stroke:0.18px currentColor">Quality: 100%</div><div class="t" style="left:857.88px;top:812.58px;font-size:9.2px;font-weight:normal;font-style:normal;color:#000;font-family:'Liberation Sans';transform:scaleX(0.7164);-webkit-text-stroke:0.18px currentColor">BER: &lt;1.0E-7</div><div class="t" style="left:862.66px;top:832.98px;font-size:9.2px;font-weight:normal;font-style:normal;color:#000;font-family:'Liberation Sans';transform:scaleX(0.7409);-webkit-text-stroke:0.18px currentColor">Level: 56%</div><div class="t" style="left:9.30px;top:811.30px;font-size:10px;font-weight:normal;font-style:normal;color:#000;font-family:'Liberation Sans';transform:scaleX(0.7000);-webkit-text-stroke:0.18px currentColor">Present</div><div class="t" style="left:14.09px;top:831.90px;font-size:10px;font-weight:normal;font-style:normal;color:#000;font-family:'Liberation Sans';transform:scaleX(0.7100);-webkit-text-stroke:0.18px currentColor">Lock</div><div class="t" style="left:1163.45px;top:811.30px;font-size:10px;font-weight:normal;font-style:normal;color:#000;font-family:'Liberation Sans';transform:scaleX(0.7500);-webkit-text-stroke:0.18px currentColor">Input TS</div><div class="t" style="left:1165.54px;top:831.50px;font-size:10px;font-weight:normal;font-style:normal;color:#000;font-family:'Liberation Sans';transform:scaleX(0.6611);-webkit-text-stroke:0.18px currentColor">Sync TS</div><div class="t" style="left:0.22px;top:856.92px;font-size:9.5px;font-weight:normal;font-style:normal;color:#000;font-family:'Liberation Sans';transform:scaleX(0.7759);-webkit-text-stroke:0.18px currentColor">Locked -&gt; Uptime: 53:20:33</div><div class="t" style="left:597.14px;top:857.32px;font-size:9.5px;font-weight:normal;font-style:normal;color:#000;font-family:'Liberation Sans';transform:scaleX(0.7573);-webkit-text-stroke:0.18px currentColor">Best signal has been seen at 2023-07-13 20.06 with 12,0 dB</div><div class="t" style="left:936.70px;top:197.35px;font-size:9px;font-weight:normal;font-style:normal;color:#505050;font-family:'Liberation Sans';transform:scaleX(0.7803);-webkit-text-stroke:0.18px currentColor">2023-07-15 23.45.31, value: 11,5</div><div class="t" style="left:387.59px;top:592.01px;font-size:13.4px;font-weight:normal;font-style:normal;color:#0a0a0a;font-family:'Liberation Sans';transform:scaleX(1.1086);">Synchronous nanocorrection technology from its author Roman Dávid applied in the practice</div><div class="t" style="left:392.87px;top:614.71px;font-size:13.4px;font-weight:normal;font-style:normal;color:#0a0a0a;font-family:'Liberation Sans';transform:scaleX(1.1286);">of Multistream technology reception</div><div class="t" style="left:567.31px;top:74.01px;font-size:13px;font-weight:bold;font-style:normal;color:#26338a;font-family:'Liberation Serif';transform:scaleX(0.6914);-webkit-text-stroke:0.35px currentColor"><span style="color:#cc2a30">DX</span>SATCS.COM</div><div class="t" style="left:649.50px;top:6.30px;font-size:12px;font-weight:bold;font-style:italic;color:#101010;font-family:'Liberation Sans';transform:scaleX(0.6830);">Lučenec-Slovakia_R.Dávid</div><div class="t" style="left:653.50px;top:27.14px;font-size:11.6px;font-weight:bold;font-style:normal;color:#101010;font-family:'Liberation Sans';transform:scaleX(0.7105);">Sat, Jul 15</div><div class="t" style="left:707.50px;top:23.05px;font-size:7px;font-weight:bold;font-style:normal;color:#101010;font-family:'Liberation Sans';transform:scaleX(0.6875);">+1</div><div class="t" style="left:702.00px;top:31.55px;font-size:7px;font-weight:bold;font-style:normal;color:#101010;font-family:'Liberation Sans';transform:scaleX(0.7857);">DST</div><div class="t" style="left:719.00px;top:27.14px;font-size:11.6px;font-weight:bold;font-style:normal;color:#101010;font-family:'Liberation Sans';transform:scaleX(0.6596);">23:49:24</div><div class="t" style="left:759.00px;top:7.30px;font-size:10px;font-weight:bold;font-style:italic;color:#101010;font-family:'Liberation Sans';transform:scaleX(0.7536);">Berlin-Paris-Vienna-Belgrade</div><div class="t" style="left:762.80px;top:27.14px;font-size:11.6px;font-weight:bold;font-style:normal;color:#101010;font-family:'Liberation Sans';transform:scaleX(0.7158);">Sat, Jul 15</div><div class="t" style="left:817.00px;top:23.05px;font-size:7px;font-weight:bold;font-style:normal;color:#101010;font-family:'Liberation Sans';transform:scaleX(0.7250);">+1</div><div class="t" style="left:811.20px;top:31.55px;font-size:7px;font-weight:bold;font-style:normal;color:#101010;font-family:'Liberation Sans';transform:scaleX(0.7929);">DST</div><div class="t" style="left:828.00px;top:27.14px;font-size:11.6px;font-weight:bold;font-style:normal;color:#101010;font-family:'Liberation Sans';transform:scaleX(0.6723);">23:49:24</div><div class="t" style="left:900.50px;top:4.70px;font-size:14px;font-weight:bold;font-style:italic;color:#101010;font-family:'Liberation Sans';transform:scaleX(0.7321);">Moscow</div><div class="t" style="left:871.00px;top:27.14px;font-size:11.6px;font-weight:bold;font-style:normal;color:#101010;font-family:'Liberation Sans';transform:scaleX(0.7049);">Sun, Jul 16</div><div class="t" style="left:926.50px;top:24.05px;font-size:7px;font-weight:bold;font-style:normal;color:#101010;font-family:'Liberation Sans';transform:scaleX(0.8125);">+3</div><div class="t" style="left:938.00px;top:27.14px;font-size:11.6px;font-weight:bold;font-style:normal;color:#101010;font-family:'Liberation Sans';transform:scaleX(0.6489);">00:49:24</div><div class="t" style="left:1016.60px;top:4.33px;font-size:14.2px;font-weight:bold;font-style:italic;color:#101010;font-family:'Liberation Sans';transform:scaleX(0.7000);">Dubai</div><div class="t" style="left:980.80px;top:27.14px;font-size:11.6px;font-weight:bold;font-style:normal;color:#101010;font-family:'Liberation Sans';transform:scaleX(0.7016);">Sun, Jul 16</div><div class="t" style="left:1035.80px;top:23.05px;font-size:7px;font-weight:bold;font-style:normal;color:#101010;font-family:'Liberation Sans';transform:scaleX(0.7750);">+4</div><div class="t" style="left:1046.90px;top:27.14px;font-size:11.6px;font-weight:bold;font-style:normal;color:#101010;font-family:'Liberation Sans';transform:scaleX(0.6702);">01:49:24</div><div class="t" style="left:1089.00px;top:6.64px;font-size:11.6px;font-weight:bold;font-style:italic;color:#0a1a40;font-family:'Liberation Sans';transform:scaleX(0.6871);">Rabat-Casablanca-London</div><div class="t" style="left:1091.50px;top:27.14px;font-size:11.6px;font-weight:bold;font-style:normal;color:#101010;font-family:'Liberation Sans';transform:scaleX(0.7105);">Sat, Jul 15</div><div class="t" style="left:1145.50px;top:23.55px;font-size:7px;font-weight:bold;font-style:normal;color:#101010;font-family:'Liberation Sans';transform:scaleX(0.6875);">+1</div><div class="t" style="left:1156.50px;top:27.14px;font-size:11.6px;font-weight:bold;font-style:normal;color:#101010;font-family:'Liberation Sans';transform:scaleX(0.6702);">22:49:24</div></body></html>
